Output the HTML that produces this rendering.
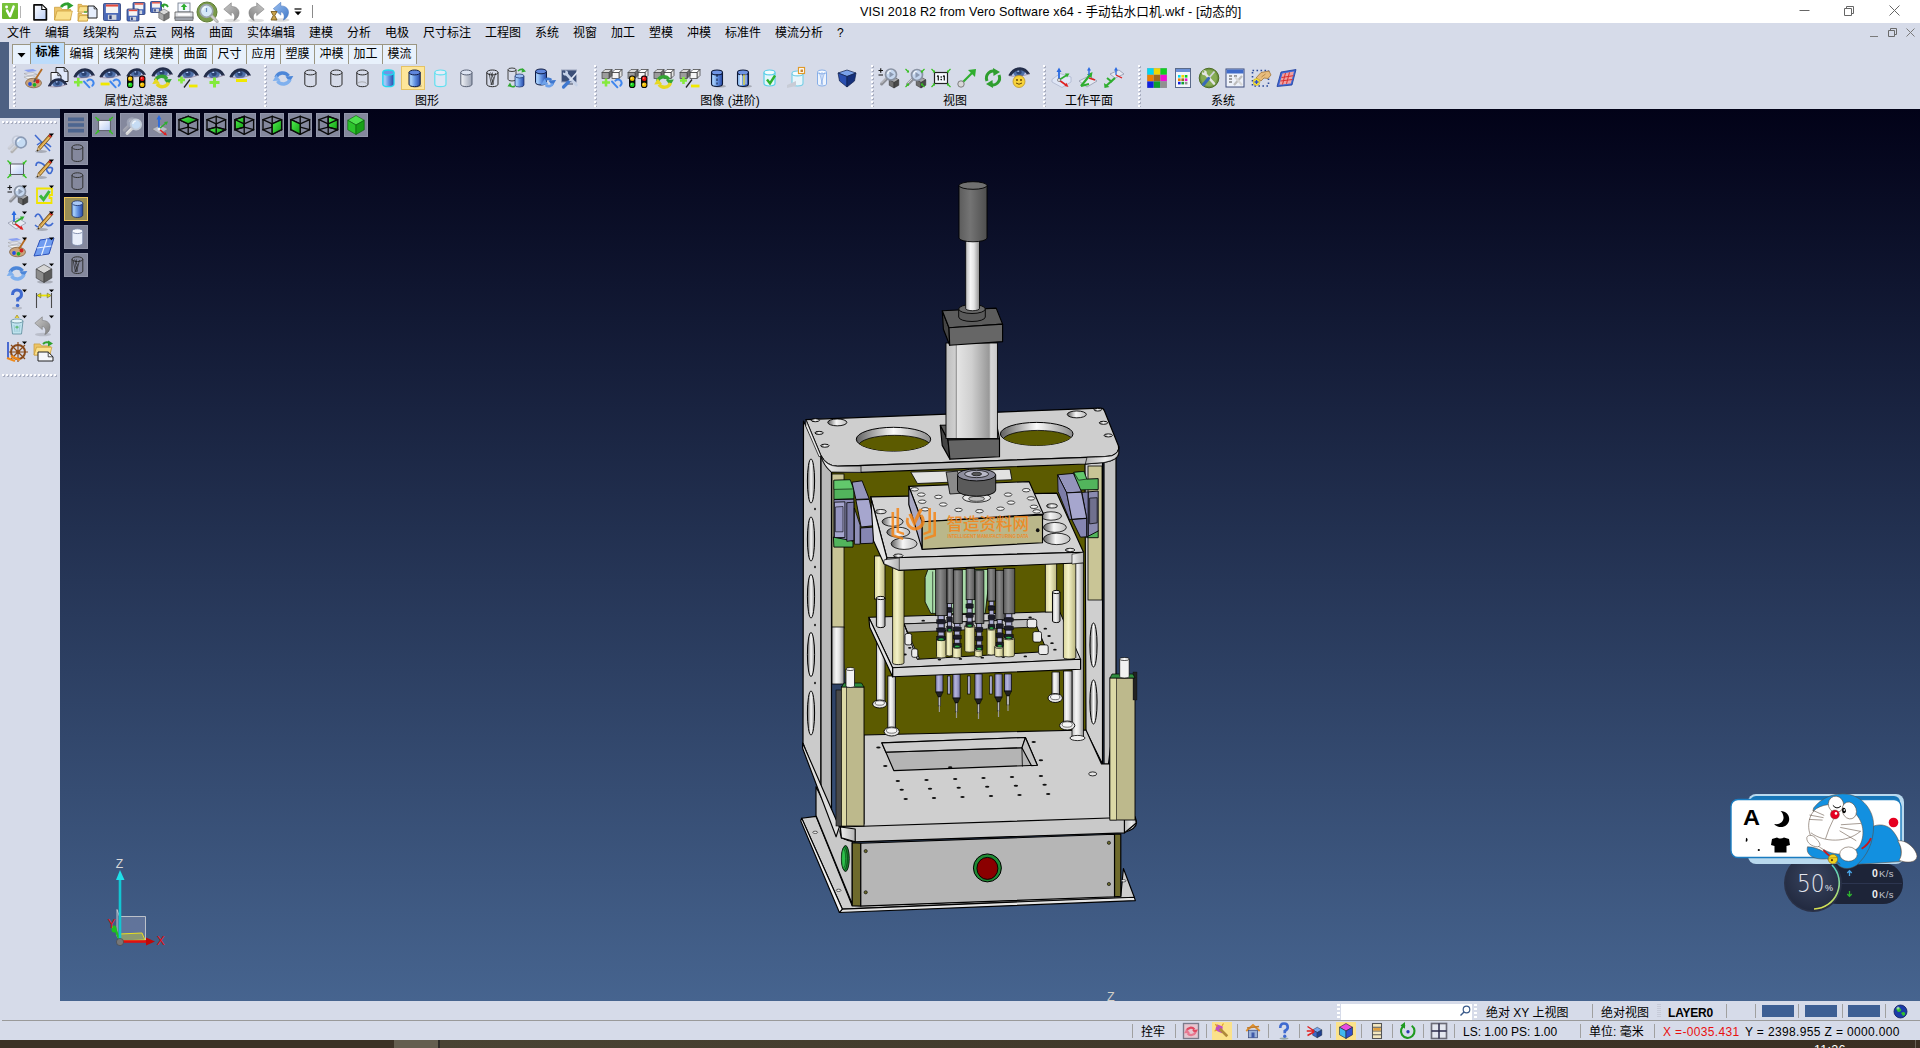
<!DOCTYPE html><html lang="zh"><head><meta charset="utf-8"><title>VISI 2018 R2</title><style>
*{box-sizing:border-box;margin:0;padding:0}
html,body{width:1920px;height:1048px;overflow:hidden;background:#d6dbe9}
body{position:relative;font-family:"Liberation Sans","Noto Sans CJK SC",sans-serif;font-size:12px;color:#000}
.abs{position:absolute}
#title{left:0;top:0;width:1920px;height:23px;background:#fff}
#title .t{position:absolute;left:860px;top:4px;height:16px;line-height:16px;font-size:12.6px;letter-spacing:.11px;white-space:nowrap;color:#000}
#menu{left:0;top:23px;width:1920px;height:20px;background:#d6dbe9}
#menu span{position:absolute;top:2px;line-height:16px;font-size:12px;white-space:nowrap}
#strip1{left:0;top:42px;width:9px;height:76px;background:#4d6082}
#strip2{left:0;top:109px;width:60px;height:9px;background:#4d6082}
#tabs{left:12px;top:43px;height:21px}
.tab{position:absolute;top:1px;height:20px;border:1px solid #9b9682;border-bottom:none;background:#e8f1fc;line-height:18px;text-align:center;font-size:12px}
.tab.sel{top:-1px;height:22px;background:#bcdcfb;font-weight:bold;line-height:19px}
#tool{left:9px;top:64px;width:1911px;height:45px;background:#d6dbe9}
.glabel{position:absolute;top:94px;line-height:14px;font-size:12px;white-space:nowrap;transform:translateX(-50%)}
.grip{position:absolute;top:65px;width:3px;height:42px;background-image:repeating-linear-gradient(#fdfdff 0 2px,transparent 2px 4px),repeating-linear-gradient(#a9aec0 0 2px,transparent 2px 4px);background-size:2px 100%,2px 100%;background-position:0 0,1px 1px;background-repeat:no-repeat}
.ic{position:absolute;width:24px;height:24px}
.ic svg{position:absolute;left:0;top:0;width:24px;height:24px;overflow:visible}
#vp{left:60px;top:109px;width:1860px;height:892px;background:linear-gradient(#020218,#46648f)}
#left{left:0;top:118px;width:60px;height:883px;background:#d6dbe9}
.hgrip{position:absolute;left:2px;width:56px;height:3px;background-image:repeating-linear-gradient(90deg,#fdfdff 0 2px,transparent 2px 4px),repeating-linear-gradient(90deg,#a9aec0 0 2px,transparent 2px 4px);background-size:100% 2px,100% 2px;background-position:0 0,1px 1px;background-repeat:no-repeat}
#st1{left:0;top:1001px;width:1920px;height:20px;background:#d6dbe9}
#st2{left:0;top:1021px;width:1920px;height:19px;background:#d6dbe9}
#stline{left:2px;top:1020px;width:1918px;height:1px;background:#9a9a9a}
#task{left:0;top:1040px;width:1920px;height:8px;background:#3c3226}
.stt{position:absolute;line-height:16px;font-size:12px;white-space:nowrap}
.vsep{position:absolute;width:1px;background:#a0a0a0}
.vb{position:absolute;width:24px;height:24px;background:#84889d;border:1px solid #9296aa}
.vb svg{position:absolute;left:-1px;top:-1px;width:24px;height:24px;overflow:visible}
</style></head><body><div id="title" class="abs"><div class="t">VISI 2018 R2 from Vero Software x64 - 手动钻水口机.wkf - [动态的]</div><svg class="abs" style="left:2px;top:3px" width="16" height="16" viewBox="0 0 16 16"><rect width="16" height="16" rx="1" fill="#68b82a"/><rect width="16" height="7" rx="1" fill="#86cc4c" opacity=".5"/><path d="M5 7.600L8 13.200L11.600 3.600" fill="none" stroke="#fff" stroke-width="2.500" stroke-linecap="round" stroke-linejoin="round"/><circle cx="4.600" cy="4" r="1.450" fill="#fff"/></svg><div class="abs" style="left:20px;top:6px;width:1px;height:12px;background:#b5b5b5"></div><div class="ic" style="left:28px;top:0px;"><svg viewBox="0 0 24 24"><path d="M6 4.800h8l4.400 4.400v10.600h-12.400z" fill="url(#gdoc)" stroke="#0a0a0a" stroke-width="1.700" stroke-linejoin="round"/><path d="M13.800 5v4.500h4.500" fill="#fff" stroke="#0a0a0a" stroke-width="1.100"/></svg></div><div class="ic" style="left:52px;top:0px;"><svg viewBox="0 0 24 24"><path d="M2.5 7.25h5.95l1.7 2.25h8.5v10.5h-16.15z" fill="#ecc468" stroke="#c89a34" stroke-width="0.7"/><path d="M2.5 20l2.55 -9h15.3l-2.04 9z" fill="#fae08c" stroke="#c89a34" stroke-width="0.7"/><path d="M9 7 q4 -5 9 -2" fill="none" stroke="#2fa02f" stroke-width="2.6"/><polygon points="15.5,2 21.5,5.5 15.5,9.5" fill="#2fa02f"/></svg></div><div class="ic" style="left:76px;top:0px;"><svg viewBox="0 0 24 24"><path d="M2 4.35h3.5l1 1.35h5v6.3h-9.5z" fill="#ecc468" stroke="#c89a34" stroke-width="0.7"/><path d="M2 12l1.5 -5.4h9l-1.2 5.4z" fill="#fae08c" stroke="#c89a34" stroke-width="0.7"/><path d="M2 13.35h3.5l1 1.35h5v6.3h-9.5z" fill="#ecc468" stroke="#c89a34" stroke-width="0.7"/><path d="M2 21l1.5 -5.4h9l-1.2 5.4z" fill="#fae08c" stroke="#c89a34" stroke-width="0.7"/><path d="M12 6h6.12l2.88 2.88v9.12h-9z" fill="#e6eefc" stroke="#222" stroke-width="1"/><path d="M18.12 6v2.88h2.88" fill="none" stroke="#222" stroke-width="0.8"/><path d="M8 12h3" stroke="#3a3" stroke-width="1.2"/></svg></div><div class="ic" style="left:99.5px;top:0px;"><svg viewBox="0 0 24 24"><rect x="3.5" y="3.5" width="17" height="17" rx="1" fill="#4a69b8" stroke="#2a3c78" stroke-width="0.8"/><rect x="5.88" y="4.52" width="12.24" height="8.5" fill="#f4f4f4"/><rect x="5.88" y="4.52" width="12.24" height="2.04" fill="#e44a3a"/><rect x="7.92" y="14.72" width="8.5" height="5.1" fill="#d0d4dc"/><rect x="9.28" y="15.4" width="2.38" height="3.74" fill="#2a3c78"/></svg></div><div class="ic" style="left:124px;top:0px;"><svg viewBox="0 0 24 24"><rect x="9" y="2.5" width="12" height="12" rx="1" fill="#4a69b8" stroke="#2a3c78" stroke-width="0.8"/><rect x="10.68" y="3.22" width="8.64" height="6" fill="#f4f4f4"/><rect x="10.68" y="3.22" width="8.64" height="1.44" fill="#e44a3a"/><rect x="12.12" y="10.42" width="6" height="3.6" fill="#d0d4dc"/><rect x="13.08" y="10.9" width="1.68" height="2.64" fill="#2a3c78"/><rect x="3" y="9" width="12" height="12" rx="1" fill="#4a69b8" stroke="#2a3c78" stroke-width="0.8"/><rect x="4.68" y="9.72" width="8.64" height="6" fill="#f4f4f4"/><rect x="4.68" y="9.72" width="8.64" height="1.44" fill="#e44a3a"/><rect x="6.12" y="16.92" width="6" height="3.6" fill="#d0d4dc"/><rect x="7.08" y="17.4" width="1.68" height="2.64" fill="#2a3c78"/></svg></div><div class="ic" style="left:148px;top:0px;"><svg viewBox="0 0 24 24"><rect x="2.5" y="1.5" width="11" height="11" rx="1" fill="#4a69b8" stroke="#2a3c78" stroke-width="0.8"/><rect x="4.04" y="2.16" width="7.92" height="5.5" fill="#f4f4f4"/><rect x="4.04" y="2.16" width="7.92" height="1.32" fill="#e44a3a"/><rect x="5.36" y="8.76" width="5.5" height="3.3" fill="#d0d4dc"/><rect x="6.24" y="9.2" width="1.54" height="2.42" fill="#2a3c78"/><polygon points="16,9 21.22,12 16,15 10.78,12" fill="#d9d9d9" stroke="#555" stroke-width="0.5"/><polygon points="10.78,12 16,15 16,21 10.78,18" fill="#a9a9a9" stroke="#555" stroke-width="0.5"/><polygon points="21.22,12 16,15 16,21 21.22,18" fill="#7a7a7a" stroke="#555" stroke-width="0.5"/><path d="M14 6 q4 -3 6 1" fill="none" stroke="#2fa02f" stroke-width="1.8"/><polygon points="12.5,5.5 16.5,3 16,8" fill="#2fa02f"/></svg></div><div class="ic" style="left:172px;top:0px;"><svg viewBox="0 0 24 24"><rect x="6" y="3" width="12" height="9" fill="#f4f8ff" stroke="#6a7486" stroke-width="0.8"/><path d="M12 10V5.5" stroke="#2fae2f" stroke-width="2.2"/><polygon points="8.8,7 12,3.4 15.2,7" fill="#2fae2f"/><path d="M3 12h18v7H3z" fill="#e4e6ea" stroke="#555" stroke-width="0.8"/><rect x="3" y="17" width="18" height="3.5" fill="#9fa3ab" stroke="#555" stroke-width="0.6"/><rect x="6" y="13.5" width="12" height="2" fill="#fff"/></svg></div><div class="ic" style="left:195px;top:0px;"><svg viewBox="0 0 24 24"><circle cx="12" cy="12" r="10" fill="#7a9a4a"/><circle cx="12" cy="12" r="10" fill="none" stroke="#5d7c34" stroke-width="1"/><path d="M16.225 15.725l5.985 5.985" stroke="#b9b9b9" stroke-width="3.200" stroke-linecap="round"/><path d="M15.725 15.225l5.67 5.67" stroke="#fff" stroke-width="1" stroke-linecap="round" opacity=".6"/><circle cx="11.5" cy="11" r="6.3" fill="#d6e8fa" stroke="#9aa3ad" stroke-width="1.700"/><path d="M7.72 10.37a3.78 3.78 0 0 1 3.465 -3.465" fill="none" stroke="#fff" stroke-width="1.200" opacity=".8"/><path d="M11.5 8v4" stroke="#6b8fc0" stroke-width="1.2"/></svg></div><div class="ic" style="left:220px;top:0px;"><svg viewBox="0 0 24 24"><g transform="translate(0 0)"><ellipse cx="12" cy="20.500" rx="8" ry="1.800" fill="#000" opacity=".13"/><path d="M3.800 9.200 L11.300 2.800 L11.300 6.400 C17 6.400 19.400 10 19 13.600 C18.600 17.200 16.400 19.600 13.800 20.600 C15.400 17.600 15 13.200 11.300 12.300 L11.300 15.600 Z" fill="url(#gArr)" stroke="#6f6f6f" stroke-width=".5"/></g></svg></div><div class="ic" style="left:243.5px;top:0px;"><svg viewBox="0 0 24 24"><g transform="translate(24 0) scale(-1 1)"><ellipse cx="12" cy="20.500" rx="8" ry="1.800" fill="#000" opacity=".13"/><path d="M3.800 9.200 L11.300 2.800 L11.300 6.400 C17 6.400 19.400 10 19 13.600 C18.600 17.200 16.400 19.600 13.800 20.600 C15.400 17.600 15 13.200 11.300 12.300 L11.300 15.600 Z" fill="url(#gArr)" stroke="#6f6f6f" stroke-width=".5"/></g></svg></div><div class="ic" style="left:267.5px;top:0px;"><svg viewBox="0 0 24 24"><g transform="translate(1.5 -0.5)"><ellipse cx="12" cy="20.500" rx="8" ry="1.800" fill="#000" opacity=".13"/><path d="M3.800 9.200 L11.300 2.800 L11.300 6.400 C17 6.400 19.400 10 19 13.600 C18.600 17.200 16.400 19.600 13.800 20.600 C15.400 17.600 15 13.200 11.300 12.300 L11.300 15.600 Z" fill="url(#gArrB)" stroke="#3f6fb8" stroke-width=".5"/></g><path d="M3 11.5h6l-2.2 4 2.2 4.5h-6l2.2-4.5z" fill="#c9a24a" stroke="#6a4e14" stroke-width="0.8"/></svg></div><svg class="abs" style="left:294px;top:8px" width="9" height="9"><path d="M0.5 1h7" stroke="#000" stroke-width="1.2"/><path d="M0.5 3.5h7l-3.5 3.8z" fill="#000"/></svg><div class="abs" style="left:312px;top:5px;width:1px;height:13px;background:#8a8a8a"></div><svg class="abs" style="left:1780px;top:0" width="140" height="23" viewBox="0 0 140 23"><path d="M19.500 10.500h10" stroke="#666" stroke-width="1"/><path d="M64.500 8.500h7v7h-7zM66.500 8.500v-2h7v7h-2" fill="none" stroke="#666" stroke-width="1"/><path d="M109.500 5.500l10 10M119.500 5.500l-10 10" stroke="#666" stroke-width="1"/></svg><svg width="0" height="0" style="position:absolute"><defs><linearGradient id="gdoc" x1="0" y1="0" x2="1" y2="1"><stop offset="0" stop-color="#fff"/><stop offset="1" stop-color="#b9cdf5"/></linearGradient><linearGradient id="gcylb" x1="0" x2="1"><stop offset="0" stop-color="#8fbcf4"/><stop offset=".2" stop-color="#a4ccf8"/><stop offset=".55" stop-color="#5f8fe0"/><stop offset="1" stop-color="#2848a4"/></linearGradient><linearGradient id="gGreen" x1="0" y1="0" x2="1" y2="1"><stop offset="0" stop-color="#52f052"/><stop offset="1" stop-color="#12a012"/></linearGradient><linearGradient id="gArr" x1="0" y1="0" x2="1" y2="1"><stop offset="0" stop-color="#c9c9c9"/><stop offset="1" stop-color="#808080"/></linearGradient><linearGradient id="gArrB" x1="0" y1="0" x2="1" y2="1"><stop offset="0" stop-color="#9cc0f0"/><stop offset="1" stop-color="#3f78c8"/></linearGradient><linearGradient id="gcylg" x1="0" x2="1"><stop offset="0" stop-color="#f4f6fa"/><stop offset="1" stop-color="#9aa2b4"/></linearGradient></defs></svg></div><div id="menu" class="abs"><span style="left:7px">文件</span><span style="left:45px">编辑</span><span style="left:83px">线架构</span><span style="left:133px">点云</span><span style="left:171px">网格</span><span style="left:209px">曲面</span><span style="left:247px">实体编辑</span><span style="left:309px">建模</span><span style="left:347px">分析</span><span style="left:385px">电极</span><span style="left:423px">尺寸标注</span><span style="left:485px">工程图</span><span style="left:535px">系统</span><span style="left:573px">视窗</span><span style="left:611px">加工</span><span style="left:649px">塑模</span><span style="left:687px">冲模</span><span style="left:725px">标准件</span><span style="left:775px">模流分析</span><span style="left:837px">?</span><svg class="abs" style="left:1860px;top:0" width="60" height="20" viewBox="0 0 60 20"><path d="M10 13.500h8" stroke="#7a7a7a" stroke-width="1"/><path d="M28.500 7.500h6v6h-6zM30.500 7.500v-2h6v6h-2" fill="none" stroke="#6a6a6a" stroke-width="1"/><path d="M46.500 5.500l8 8M54.500 5.500l-8 8" stroke="#7a7a7a" stroke-width="1"/></svg></div><div id="strip1" class="abs"></div><div id="strip2" class="abs"></div><div id="tabs" class="abs"><div class="tab" style="left:0;width:19px;background:#e8f1fc"><svg width="17" height="18" style="position:absolute;left:0;top:0"><path d="M4.5 8h8l-4 4.5z" fill="#000"/></svg></div><div class="tab sel" style="left:18px;width:35px">标准</div><div class="tab" style="left:52px;width:35px">编辑</div><div class="tab" style="left:86px;width:47px">线架构</div><div class="tab" style="left:132px;width:35px">建模</div><div class="tab" style="left:166px;width:35px">曲面</div><div class="tab" style="left:200px;width:35px">尺寸</div><div class="tab" style="left:234px;width:35px">应用</div><div class="tab" style="left:268px;width:35px">塑膜</div><div class="tab" style="left:302px;width:35px">冲模</div><div class="tab" style="left:336px;width:35px">加工</div><div class="tab" style="left:370px;width:35px">模流</div></div><div id="tool" class="abs"></div><div class="grip" style="left:13px"></div><div class="grip" style="left:264px"></div><div class="grip" style="left:594px"></div><div class="grip" style="left:871px"></div><div class="grip" style="left:1043px"></div><div class="grip" style="left:1138px"></div><div class="glabel" style="left:136px">属性/过滤器</div><div class="glabel" style="left:427px">图形</div><div class="glabel" style="left:730px">图像 (进阶)</div><div class="glabel" style="left:955px">视图</div><div class="glabel" style="left:1089px">工作平面</div><div class="glabel" style="left:1223px">系统</div><div class="ic" style="left:21px;top:66px;"><svg viewBox="0 0 24 24"><path d="M3 4l9-1 4 2-9 1z" fill="#8aa0f0"/><path d="M3 7.500l9-1 4 2-9 1z" fill="#e6e6ee" stroke="#888" stroke-width=".4"/><path d="M3 11l9-1 4 2-9 1z" fill="#f4f4f4" stroke="#888" stroke-width=".4"/><ellipse cx="12.500" cy="17" rx="8" ry="4.800" fill="#c9a27a" stroke="#7a5a3a" stroke-width=".7"/><circle cx="9" cy="18" r="1.900" fill="#2450e0"/><circle cx="13.500" cy="18.800" r="1.900" fill="#20b020"/><circle cx="16.500" cy="15.500" r="1.900" fill="#d02020"/><path d="M21 3L14 14" stroke="#b46a22" stroke-width="1.800"/><path d="M14.800 12.700L13 16" stroke="#555" stroke-width="1.800"/></svg></div><div class="ic" style="left:47px;top:66px;"><svg viewBox="0 0 24 24"><path d="M9 1.5h8.16l3.84 3.84v10.16h-12z" fill="#dfe8fa" stroke="#222" stroke-width="1"/><path d="M17.16 1.5v3.84h3.84" fill="none" stroke="#222" stroke-width="0.8"/><path d="M4 6.5h6.8l3.2 3.2v8.8h-10z" fill="url(#gdoc)" stroke="#222" stroke-width="1"/><path d="M10.8 6.5v3.2h3.2" fill="none" stroke="#222" stroke-width="0.8"/><clipPath id="ey1"><path d="M1.5 20.11 C4.2 14.78 7.8 13 11.4 13 C15 13 17.7 15.22 19.5 18.33 C16.8 20.11 13.2 21 9.6 21 C6 21 3.3 20.56 1.5 20.11 Z"/></clipPath><path d="M1.5 20.11 C4.2 14.78 7.8 13 11.4 13 C15 13 17.7 15.22 19.5 18.33 C16.8 20.11 13.2 21 9.6 21 C6 21 3.3 20.56 1.5 20.11 Z" fill="#bccbee"/><g clip-path="url(#ey1)"><ellipse cx="10.5" cy="17.0889" rx="5.22" ry="4.44444" fill="#4f70a8"/><ellipse cx="10.5" cy="16.9111" rx="2.34" ry="2.22222" fill="#2c4474"/><ellipse cx="9.78" cy="15.8444" rx="0.99" ry="0.8" fill="#b9d2ff"/><path d="M1.5 20.11 C4.2 14.78 7.8 13 11.4 13 C15 13 17.7 15.22 19.5 18.33" fill="none" stroke="#25314f" stroke-width="4.08889"/></g><path d="M1.77 19.76 C4.2 14.78 7.8 13 11.4 13 C15 13 17.7 15.22 19.5 18.33" fill="none" stroke="#222c48" stroke-width="1.500" stroke-linecap="round"/><path d="M1.5 20.29 C6 21.27 13.2 21.27 19.5 18.51" fill="none" stroke="#8a6a7a" stroke-width=".5"/></svg></div><div class="ic" style="left:72px;top:66px;"><svg viewBox="0 0 24 24"><clipPath id="ey2"><path d="M2 11 C5 5 9 3 13 3 C17 3 20 5.5 22 9 C19 11 15 12 11 12 C7 12 4 11.5 2 11 Z"/></clipPath><path d="M2 11 C5 5 9 3 13 3 C17 3 20 5.5 22 9 C19 11 15 12 11 12 C7 12 4 11.5 2 11 Z" fill="#bccbee"/><g clip-path="url(#ey2)"><ellipse cx="12" cy="7.6" rx="5.8" ry="5" fill="#4f70a8"/><ellipse cx="12" cy="7.4" rx="2.6" ry="2.5" fill="#2c4474"/><ellipse cx="11.2" cy="6.2" rx="1.1" ry="0.9" fill="#b9d2ff"/><path d="M2 11 C5 5 9 3 13 3 C17 3 20 5.5 22 9" fill="none" stroke="#25314f" stroke-width="4.6"/></g><path d="M2.3 10.6 C5 5 9 3 13 3 C17 3 20 5.5 22 9" fill="none" stroke="#222c48" stroke-width="1.500" stroke-linecap="round"/><path d="M2 11.2 C7 12.3 15 12.3 22 9.2" fill="none" stroke="#8a6a7a" stroke-width=".5"/><path d="M2 16.25h8.5 M6.25 12v8.5" stroke="#84ea3c" stroke-width="2.6" fill="none"/><path d="M12 15.5 l5.400 5.800" stroke="#3f86ee" stroke-width="1.900" fill="none" stroke-linecap="round"/><path d="M15.3 14.7 q3 -2.300 5.500 .100 q2 2.700 -.500 5" stroke="#3f86ee" stroke-width="1.900" fill="none" stroke-linecap="round"/></svg></div><div class="ic" style="left:98px;top:66px;"><svg viewBox="0 0 24 24"><clipPath id="ey3"><path d="M2 11 C5 5 9 3 13 3 C17 3 20 5.5 22 9 C19 11 15 12 11 12 C7 12 4 11.5 2 11 Z"/></clipPath><path d="M2 11 C5 5 9 3 13 3 C17 3 20 5.5 22 9 C19 11 15 12 11 12 C7 12 4 11.5 2 11 Z" fill="#bccbee"/><g clip-path="url(#ey3)"><ellipse cx="12" cy="7.6" rx="5.8" ry="5" fill="#4f70a8"/><ellipse cx="12" cy="7.4" rx="2.6" ry="2.5" fill="#2c4474"/><ellipse cx="11.2" cy="6.2" rx="1.1" ry="0.9" fill="#b9d2ff"/><path d="M2 11 C5 5 9 3 13 3 C17 3 20 5.5 22 9" fill="none" stroke="#25314f" stroke-width="4.6"/></g><path d="M2.3 10.6 C5 5 9 3 13 3 C17 3 20 5.5 22 9" fill="none" stroke="#222c48" stroke-width="1.500" stroke-linecap="round"/><path d="M2 11.2 C7 12.3 15 12.3 22 9.2" fill="none" stroke="#8a6a7a" stroke-width=".5"/><path d="M2.6 18h9" stroke="#f0e800" stroke-width="2.8" fill="none"/><path d="M12.3 15.5 l5.400 5.800" stroke="#3f86ee" stroke-width="1.900" fill="none" stroke-linecap="round"/><path d="M15.6 14.7 q3 -2.300 5.500 .100 q2 2.700 -.500 5" stroke="#3f86ee" stroke-width="1.900" fill="none" stroke-linecap="round"/></svg></div><div class="ic" style="left:124px;top:66px;"><svg viewBox="0 0 24 24"><clipPath id="ey4"><path d="M3 10.11 C5.7 4.78 9.3 3 12.9 3 C16.5 3 19.2 5.22 21 8.33 C18.3 10.11 14.7 11 11.1 11 C7.5 11 4.8 10.56 3 10.11 Z"/></clipPath><path d="M3 10.11 C5.7 4.78 9.3 3 12.9 3 C16.5 3 19.2 5.22 21 8.33 C18.3 10.11 14.7 11 11.1 11 C7.5 11 4.8 10.56 3 10.11 Z" fill="#bccbee"/><g clip-path="url(#ey4)"><ellipse cx="12" cy="7.08889" rx="5.22" ry="4.44444" fill="#4f70a8"/><ellipse cx="12" cy="6.91111" rx="2.34" ry="2.22222" fill="#2c4474"/><ellipse cx="11.28" cy="5.84444" rx="0.99" ry="0.8" fill="#b9d2ff"/><path d="M3 10.11 C5.7 4.78 9.3 3 12.9 3 C16.5 3 19.2 5.22 21 8.33" fill="none" stroke="#25314f" stroke-width="4.08889"/></g><path d="M3.27 9.76 C5.7 4.78 9.3 3 12.9 3 C16.5 3 19.2 5.22 21 8.33" fill="none" stroke="#222c48" stroke-width="1.500" stroke-linecap="round"/><path d="M3 10.29 C7.5 11.27 14.7 11.27 21 8.51" fill="none" stroke="#8a6a7a" stroke-width=".5"/><rect x="3" y="9.5" width="6.4" height="12.6" rx="2.8" fill="#080808"/><circle cx="6.2" cy="12.8" r="2.3" fill="#f4c000"/><circle cx="5.7" cy="12.1" r=".8" fill="#fff" opacity=".55"/><circle cx="6.2" cy="18.8" r="2.3" fill="#18d018"/><circle cx="5.7" cy="18.1" r=".8" fill="#fff" opacity=".55"/><rect x="15" y="9.5" width="6.4" height="12.6" rx="2.8" fill="#080808"/><circle cx="18.2" cy="12.8" r="2.3" fill="#f01010"/><circle cx="17.7" cy="12.1" r=".8" fill="#fff" opacity=".55"/><circle cx="18.2" cy="18.8" r="2.3" fill="#f4c000"/><circle cx="17.7" cy="18.1" r=".8" fill="#fff" opacity=".55"/></svg></div><div class="ic" style="left:150px;top:66px;"><svg viewBox="0 0 24 24"><clipPath id="ey5"><path d="M2 10 C5 4 9 2 13 2 C17 2 20 4.5 22 8 C19 10 15 11 11 11 C7 11 4 10.5 2 10 Z"/></clipPath><path d="M2 10 C5 4 9 2 13 2 C17 2 20 4.5 22 8 C19 10 15 11 11 11 C7 11 4 10.5 2 10 Z" fill="#bccbee"/><g clip-path="url(#ey5)"><ellipse cx="12" cy="6.6" rx="5.8" ry="5" fill="#4f70a8"/><ellipse cx="12" cy="6.4" rx="2.6" ry="2.5" fill="#2c4474"/><ellipse cx="11.2" cy="5.2" rx="1.1" ry="0.9" fill="#b9d2ff"/><path d="M2 10 C5 4 9 2 13 2 C17 2 20 4.5 22 8" fill="none" stroke="#25314f" stroke-width="4.6"/></g><path d="M2.3 9.6 C5 4 9 2 13 2 C17 2 20 4.5 22 8" fill="none" stroke="#222c48" stroke-width="1.500" stroke-linecap="round"/><path d="M2 10.2 C7 11.3 15 11.3 22 8.2" fill="none" stroke="#8a6a7a" stroke-width=".5"/><path d="M5.5 14.5 a6.5 6.175 0 0 1 11.5 -1.5" fill="none" stroke="#35a535" stroke-width="3.4"/><polygon points="14,13.5 21.8,13 18.2,19" fill="#35a535"/><path d="M18.5 16.5 a6.5 6.175 0 0 1 -11.5 1.5" fill="none" stroke="#e8d820" stroke-width="3.4"/><polygon points="10,17.5 2.2,18 5.8,12" fill="#e8d820"/></svg></div><div class="ic" style="left:176px;top:66px;"><svg viewBox="0 0 24 24"><clipPath id="ey6"><path d="M2 11 C5 5 9 3 13 3 C17 3 20 5.5 22 9 C19 11 15 12 11 12 C7 12 4 11.5 2 11 Z"/></clipPath><path d="M2 11 C5 5 9 3 13 3 C17 3 20 5.5 22 9 C19 11 15 12 11 12 C7 12 4 11.5 2 11 Z" fill="#bccbee"/><g clip-path="url(#ey6)"><ellipse cx="12" cy="7.6" rx="5.8" ry="5" fill="#4f70a8"/><ellipse cx="12" cy="7.4" rx="2.6" ry="2.5" fill="#2c4474"/><ellipse cx="11.2" cy="6.2" rx="1.1" ry="0.9" fill="#b9d2ff"/><path d="M2 11 C5 5 9 3 13 3 C17 3 20 5.5 22 9" fill="none" stroke="#25314f" stroke-width="4.6"/></g><path d="M2.3 10.6 C5 5 9 3 13 3 C17 3 20 5.5 22 9" fill="none" stroke="#222c48" stroke-width="1.500" stroke-linecap="round"/><path d="M2 11.2 C7 12.3 15 12.3 22 9.2" fill="none" stroke="#8a6a7a" stroke-width=".5"/><path d="M2 14h7 M5.5 10.5v7" stroke="#84ea3c" stroke-width="2.6" fill="none"/><path d="M8 21.500L14 13.500" stroke="#222" stroke-width="1.300"/><path d="M13 20h8.5" stroke="#f0e800" stroke-width="2.8" fill="none"/></svg></div><div class="ic" style="left:202px;top:66px;"><svg viewBox="0 0 24 24"><clipPath id="ey7"><path d="M2 11 C5 5 9 3 13 3 C17 3 20 5.5 22 9 C19 11 15 12 11 12 C7 12 4 11.5 2 11 Z"/></clipPath><path d="M2 11 C5 5 9 3 13 3 C17 3 20 5.5 22 9 C19 11 15 12 11 12 C7 12 4 11.5 2 11 Z" fill="#bccbee"/><g clip-path="url(#ey7)"><ellipse cx="12" cy="7.6" rx="5.8" ry="5" fill="#4f70a8"/><ellipse cx="12" cy="7.4" rx="2.6" ry="2.5" fill="#2c4474"/><ellipse cx="11.2" cy="6.2" rx="1.1" ry="0.9" fill="#b9d2ff"/><path d="M2 11 C5 5 9 3 13 3 C17 3 20 5.5 22 9" fill="none" stroke="#25314f" stroke-width="4.6"/></g><path d="M2.3 10.6 C5 5 9 3 13 3 C17 3 20 5.5 22 9" fill="none" stroke="#222c48" stroke-width="1.500" stroke-linecap="round"/><path d="M2 11.2 C7 12.3 15 12.3 22 9.2" fill="none" stroke="#8a6a7a" stroke-width=".5"/><path d="M7.5 16.5h10 M12.5 11.5v10" stroke="#84ea3c" stroke-width="3" fill="none"/></svg></div><div class="ic" style="left:228px;top:66px;"><svg viewBox="0 0 24 24"><clipPath id="ey8"><path d="M2 11 C5 5 9 3 13 3 C17 3 20 5.5 22 9 C19 11 15 12 11 12 C7 12 4 11.5 2 11 Z"/></clipPath><path d="M2 11 C5 5 9 3 13 3 C17 3 20 5.5 22 9 C19 11 15 12 11 12 C7 12 4 11.5 2 11 Z" fill="#bccbee"/><g clip-path="url(#ey8)"><ellipse cx="12" cy="7.6" rx="5.8" ry="5" fill="#4f70a8"/><ellipse cx="12" cy="7.4" rx="2.6" ry="2.5" fill="#2c4474"/><ellipse cx="11.2" cy="6.2" rx="1.1" ry="0.9" fill="#b9d2ff"/><path d="M2 11 C5 5 9 3 13 3 C17 3 20 5.5 22 9" fill="none" stroke="#25314f" stroke-width="4.6"/></g><path d="M2.3 10.6 C5 5 9 3 13 3 C17 3 20 5.5 22 9" fill="none" stroke="#222c48" stroke-width="1.500" stroke-linecap="round"/><path d="M2 11.2 C7 12.3 15 12.3 22 9.2" fill="none" stroke="#8a6a7a" stroke-width=".5"/><path d="M8 14.5h11" stroke="#f0e800" stroke-width="3" fill="none"/></svg></div><div class="ic" style="left:271px;top:66px;"><svg viewBox="0 0 24 24"><path d="M5 11.5 a7 6.65 0 0 1 12.5 -1.5" fill="none" stroke="#4c86d8" stroke-width="3.4"/><polygon points="14.5,10.5 22.3,10 18.7,16" fill="#4c86d8"/><path d="M19 13.5 a7 6.65 0 0 1 -12.5 1.5" fill="none" stroke="#7fb0ee" stroke-width="3.4"/><polygon points="9.5,14.5 1.7,15 5.3,9" fill="#7fb0ee"/></svg></div><div class="ic" style="left:298px;top:66px;"><svg viewBox="0 0 24 24"><path d="M6.8 6.464 v11.772 a5.6 2.464 0 0 0 11.2 0 v-11.772" fill="none" stroke="#2a2a2a" stroke-width="1"/><ellipse cx="12.4" cy="6.464" rx="5.6" ry="2.464" fill="none" stroke="#2a2a2a" stroke-width="1"/></svg></div><div class="ic" style="left:324px;top:66px;"><svg viewBox="0 0 24 24"><path d="M6.8 6.464 v11.772 a5.6 2.464 0 0 0 11.2 0 v-11.772" fill="none" stroke="#2a2a2a" stroke-width="1"/><ellipse cx="12.4" cy="6.464" rx="5.6" ry="2.464" fill="none" stroke="#2a2a2a" stroke-width="1"/></svg></div><div class="ic" style="left:350px;top:66px;"><svg viewBox="0 0 24 24"><path d="M6.8 6.464 v11.772 a5.6 2.464 0 0 0 11.2 0 v-11.772" fill="none" stroke="#2a2a2a" stroke-width="1"/><ellipse cx="12.4" cy="6.464" rx="5.6" ry="2.464" fill="none" stroke="#2a2a2a" stroke-width="1"/><path d="M7.500 17.800a4.500 2 0 0 1 9 0" fill="none" stroke="#999" stroke-width=".7"/></svg></div><div class="ic" style="left:376px;top:66px;"><svg viewBox="0 0 24 24"><path d="M6.8 6.464 v11.772 a5.6 2.464 0 0 0 11.2 0 v-11.772" fill="url(#gcylb)" stroke="#22d8f0" stroke-width="1.3"/><ellipse cx="12.4" cy="6.464" rx="5.6" ry="2.464" fill="#6f94e4" stroke="#22d8f0" stroke-width="1.3"/></svg></div><div class="abs" style="left:401px;top:66px;width:24px;height:24px;background:#fde69a;border:1px solid #e5c365"></div><div class="ic" style="left:401px;top:66px;"><svg viewBox="0 0 24 24"><ellipse cx="15" cy="20" rx="6" ry="1.500" fill="#000" opacity=".25"/><path d="M8 6.464 v11.772 a5.6 2.464 0 0 0 11.2 0 v-11.772" fill="url(#gcylb)" stroke="#0f1c44" stroke-width="1"/><ellipse cx="13.6" cy="6.464" rx="5.6" ry="2.464" fill="#5f86dc" stroke="#0f1c44" stroke-width="1"/></svg></div><div class="ic" style="left:428px;top:66px;"><svg viewBox="0 0 24 24"><path d="M6.8 6.464 v11.772 a5.6 2.464 0 0 0 11.2 0 v-11.772" fill="#dfe6f4" stroke="#5fe0f0" stroke-width="1.2"/><ellipse cx="12.4" cy="6.464" rx="5.6" ry="2.464" fill="#e6ecf8" stroke="#5fe0f0" stroke-width="1.2"/></svg></div><div class="ic" style="left:454px;top:66px;"><svg viewBox="0 0 24 24"><path d="M6.8 6.464 v11.772 a5.6 2.464 0 0 0 11.2 0 v-11.772" fill="url(#gcylg)" stroke="#4a5266" stroke-width="0.9"/><ellipse cx="12.4" cy="6.464" rx="5.6" ry="2.464" fill="#dde4f2" stroke="#4a5266" stroke-width="0.9"/></svg></div><div class="ic" style="left:480px;top:66px;"><svg viewBox="0 0 24 24"><path d="M6.8 6.464 v11.772 a5.6 2.464 0 0 0 11.2 0 v-11.772" fill="none" stroke="#2a2a2a" stroke-width="1"/><ellipse cx="12.4" cy="6.464" rx="5.6" ry="2.464" fill="none" stroke="#2a2a2a" stroke-width="1"/><path d="M9 7l2.500 12M15.500 7l-3 12M12.500 6.500l-1 6 2 6M10.500 6.500l3 5.500-2.500 7" stroke="#222" stroke-width=".7" fill="none"/></svg></div><div class="ic" style="left:505px;top:66px;"><svg viewBox="0 0 24 24"><path d="M3 3.76 v9.48 a4 1.76 0 0 0 8 0 v-9.48" fill="none" stroke="#444" stroke-width="1"/><ellipse cx="7" cy="3.76" rx="4" ry="1.76" fill="none" stroke="#444" stroke-width="1"/><path d="M10 9.98 v9.04 a4.5 1.98 0 0 0 9 0 v-9.04" fill="url(#gcylb)" stroke="#1a2f66" stroke-width="0.7"/><ellipse cx="14.5" cy="9.98" rx="4.5" ry="1.98" fill="#9cc0f5" stroke="#1a2f66" stroke-width="0.7"/><path d="M13 5q3-3 6-.5" fill="none" stroke="#3a3" stroke-width="1.600"/><polygon points="17.500,2 21,5.500 16.500,6.500" fill="#3a3"/><path d="M4 19q3 3 6 1" fill="none" stroke="#3a3" stroke-width="1.600"/><polygon points="5,16.500 2.500,20.500 7,20.500" fill="#3a3"/></svg></div><div class="ic" style="left:532px;top:66px;"><svg viewBox="0 0 24 24"><path d="M3.5 5.42 v11.16 a5.5 2.42 0 0 0 11 0 v-11.16" fill="url(#gcylb)" stroke="#0f1c44" stroke-width="1"/><ellipse cx="9" cy="5.42" rx="5.5" ry="2.42" fill="#5f86dc" stroke="#0f1c44" stroke-width="1"/><path d="M12.2 15.5 a4.3 4.085 0 0 1 7.1 -1.5" fill="none" stroke="#3f78d0" stroke-width="2.6"/><polygon points="16.3,14.5 24.1,14 20.5,20" fill="#3f78d0"/><path d="M20.8 17.5 a4.3 4.085 0 0 1 -7.1 1.5" fill="none" stroke="#6fa2ea" stroke-width="2.6"/><polygon points="16.7,18.5 8.9,19 12.5,13" fill="#6fa2ea"/></svg></div><div class="ic" style="left:558px;top:66px;"><svg viewBox="0 0 24 24"><rect x="3.500" y="4" width="15" height="12" fill="#3c4f78" stroke="#9aa4bc" stroke-width="1"/><rect x="8" y="17" width="7" height="2" fill="#8a92a6"/><path d="M7 6.500l11.500 12.500" stroke="#c6d2e8" stroke-width="2.600" stroke-linecap="round"/><circle cx="7.500" cy="7" r="2.600" fill="#c6d2e8"/><circle cx="6.300" cy="5.800" r="1.200" fill="#3c4f78"/><path d="M20 5.500l-10 11" stroke="#dfe6f4" stroke-width="1.800"/><path d="M10.500 16l-5 5" stroke="#3f78d0" stroke-width="3.200" stroke-linecap="round"/></svg></div><div class="ic" style="left:600px;top:66px;"><svg viewBox="0 0 24 24"><polygon points="12,6.5 15,3.5 22,3.5 19,6.5" fill="#ffffff" stroke="#333" stroke-width=".7"/><polygon points="19,6.5 22,3.5 22,9.5 19,12.5" fill="#e4e4e4" stroke="#333" stroke-width=".7"/><rect x="12" y="6.5" width="7" height="6" fill="#f6f6f6" stroke="#333" stroke-width=".7"/><polygon points="2,6.5 5,3.5 12,3.5 9,6.5" fill="#dadada" stroke="#444" stroke-width=".7"/><polygon points="9,6.5 12,3.5 12,9.5 9,12.5" fill="#6c6c6c" stroke="#444" stroke-width=".7"/><rect x="2" y="6.5" width="7" height="6" fill="#9c9c9c" stroke="#444" stroke-width=".7"/><path d="M2 16.5h8 M6 12.5v8" stroke="#84ea3c" stroke-width="2.6" fill="none"/><path d="M12 15.5 l5.400 5.800" stroke="#3f86ee" stroke-width="1.900" fill="none" stroke-linecap="round"/><path d="M15.3 14.7 q3 -2.300 5.500 .100 q2 2.700 -.500 5" stroke="#3f86ee" stroke-width="1.900" fill="none" stroke-linecap="round"/></svg></div><div class="ic" style="left:626px;top:66px;"><svg viewBox="0 0 24 24"><polygon points="12,6.5 15,3.5 22,3.5 19,6.5" fill="#ffffff" stroke="#333" stroke-width=".7"/><polygon points="19,6.5 22,3.5 22,9.5 19,12.5" fill="#e4e4e4" stroke="#333" stroke-width=".7"/><rect x="12" y="6.5" width="7" height="6" fill="#f6f6f6" stroke="#333" stroke-width=".7"/><polygon points="2,6.5 5,3.5 12,3.5 9,6.5" fill="#dadada" stroke="#444" stroke-width=".7"/><polygon points="9,6.5 12,3.5 12,9.5 9,12.5" fill="#6c6c6c" stroke="#444" stroke-width=".7"/><rect x="2" y="6.5" width="7" height="6" fill="#9c9c9c" stroke="#444" stroke-width=".7"/><rect x="3" y="9.5" width="6.4" height="12.6" rx="2.8" fill="#080808"/><circle cx="6.2" cy="12.8" r="2.3" fill="#f4c000"/><circle cx="5.7" cy="12.1" r=".8" fill="#fff" opacity=".55"/><circle cx="6.2" cy="18.8" r="2.3" fill="#18d018"/><circle cx="5.7" cy="18.1" r=".8" fill="#fff" opacity=".55"/><rect x="15" y="9.5" width="6.4" height="12.6" rx="2.8" fill="#080808"/><circle cx="18.2" cy="12.8" r="2.3" fill="#f01010"/><circle cx="17.7" cy="12.1" r=".8" fill="#fff" opacity=".55"/><circle cx="18.2" cy="18.8" r="2.3" fill="#f4c000"/><circle cx="17.7" cy="18.1" r=".8" fill="#fff" opacity=".55"/></svg></div><div class="ic" style="left:652px;top:66px;"><svg viewBox="0 0 24 24"><polygon points="12,6.5 15,3.5 22,3.5 19,6.5" fill="#ffffff" stroke="#333" stroke-width=".7"/><polygon points="19,6.5 22,3.5 22,9.5 19,12.5" fill="#e4e4e4" stroke="#333" stroke-width=".7"/><rect x="12" y="6.5" width="7" height="6" fill="#f6f6f6" stroke="#333" stroke-width=".7"/><polygon points="2,6.5 5,3.5 12,3.5 9,6.5" fill="#dadada" stroke="#444" stroke-width=".7"/><polygon points="9,6.5 12,3.5 12,9.5 9,12.5" fill="#6c6c6c" stroke="#444" stroke-width=".7"/><rect x="2" y="6.5" width="7" height="6" fill="#9c9c9c" stroke="#444" stroke-width=".7"/><path d="M5.5 15 a6.5 6.175 0 0 1 11.5 -1.5" fill="none" stroke="#35a535" stroke-width="3.4"/><polygon points="14,14 21.8,13.5 18.2,19.5" fill="#35a535"/><path d="M18.5 17 a6.5 6.175 0 0 1 -11.5 1.5" fill="none" stroke="#e8d820" stroke-width="3.4"/><polygon points="10,18 2.2,18.5 5.8,12.5" fill="#e8d820"/></svg></div><div class="ic" style="left:678px;top:66px;"><svg viewBox="0 0 24 24"><polygon points="12,6.5 15,3.5 22,3.5 19,6.5" fill="#ffffff" stroke="#333" stroke-width=".7"/><polygon points="19,6.5 22,3.5 22,9.5 19,12.5" fill="#e4e4e4" stroke="#333" stroke-width=".7"/><rect x="12" y="6.5" width="7" height="6" fill="#f6f6f6" stroke="#333" stroke-width=".7"/><polygon points="2,6.5 5,3.5 12,3.5 9,6.5" fill="#dadada" stroke="#444" stroke-width=".7"/><polygon points="9,6.5 12,3.5 12,9.5 9,12.5" fill="#6c6c6c" stroke="#444" stroke-width=".7"/><rect x="2" y="6.5" width="7" height="6" fill="#9c9c9c" stroke="#444" stroke-width=".7"/><path d="M2 14.5h7 M5.5 11v7" stroke="#84ea3c" stroke-width="2.6" fill="none"/><path d="M8 21.500L14 13.500" stroke="#222" stroke-width="1.300"/><path d="M13 20h8.5" stroke="#f0e800" stroke-width="2.8" fill="none"/></svg></div><div class="ic" style="left:705px;top:66px;"><svg viewBox="0 0 24 24"><ellipse cx="15" cy="20.200" rx="6" ry="1.400" fill="#000" opacity=".22"/><path d="M6.5 6.42 v11.66 a5.5 2.42 0 0 0 11 0 v-11.66" fill="url(#gcylb)" stroke="#0c1838" stroke-width="1.1"/><ellipse cx="12" cy="6.42" rx="5.5" ry="2.42" fill="#6f94e4" stroke="#0c1838" stroke-width="1.1"/><path d="M12 8.500v10" stroke="#0c1838" stroke-width="1" stroke-dasharray="2.500 1.500"/></svg></div><div class="ic" style="left:731px;top:66px;"><svg viewBox="0 0 24 24"><ellipse cx="15" cy="20.200" rx="6" ry="1.400" fill="#000" opacity=".22"/><path d="M6.5 6.42 v11.66 a5.5 2.42 0 0 0 11 0 v-11.66" fill="url(#gcylb)" stroke="#0c1838" stroke-width="1.1"/><ellipse cx="12" cy="6.42" rx="5.5" ry="2.42" fill="#6f94e4" stroke="#0c1838" stroke-width="1.1"/><path d="M10 8.500v10.500" stroke="#dfe6f6" stroke-width="1.800"/><path d="M13 8.500v10.500" stroke="#f0e040" stroke-width="1.400"/><path d="M15 8.300v10" stroke="#dfe6f6" stroke-width="1"/></svg></div><div class="ic" style="left:758px;top:66px;"><svg viewBox="0 0 24 24"><path d="M6 6.42 v11.16 a5.5 2.42 0 0 0 11 0 v-11.16" fill="#e4f5fb" stroke="#58cfe8" stroke-width="1.2"/><ellipse cx="11.5" cy="6.42" rx="5.5" ry="2.42" fill="#f4fbfe" stroke="#58cfe8" stroke-width="1.2"/><path d="M9 13.500l3 4 5-8" stroke="#2fb32f" stroke-width="2.400" fill="none"/></svg></div><div class="ic" style="left:784px;top:66px;"><svg viewBox="0 0 24 24"><path d="M8 7.42 v10.16 a5.5 2.42 0 0 0 11 0 v-10.16" fill="#e9f5fb" stroke="#74cfe6" stroke-width="1.1"/><ellipse cx="13.5" cy="7.42" rx="5.5" ry="2.42" fill="#f4fbfe" stroke="#74cfe6" stroke-width="1.1"/><polygon points="3,19 12,15 12,20 3,22" fill="#c8ccd6"/><rect x="14.500" y="1.500" width="6" height="6" fill="#fff" stroke="#e09a2a" stroke-width="1.200"/><rect x="16.500" y="3.500" width="2.500" height="2.500" fill="#c83"/></svg></div><div class="ic" style="left:810px;top:66px;"><svg viewBox="0 0 24 24"><path d="M7.5 5.98 v12.04 a4.5 1.98 0 0 0 9 0 v-12.04" fill="#eef4fd" stroke="#86aee8" stroke-width="1"/><ellipse cx="12" cy="5.98" rx="4.5" ry="1.98" fill="#f6faff" stroke="#86aee8" stroke-width="1"/><path d="M9.500 6.500l3 12M14.500 6.500l-3.500 12M12 6v13" stroke="#86aee8" stroke-width=".7" fill="none"/></svg></div><div class="ic" style="left:835px;top:66px;"><svg viewBox="0 0 24 24"><polygon points="3,7 12,4 21,7 12,10.500" fill="#7aa2ea" stroke="#10204a" stroke-width=".7"/><polygon points="3,7 12,10.500 12,21 4.500,15" fill="#2a4fb0" stroke="#10204a" stroke-width=".7"/><polygon points="21,7 12,10.500 12,21 19.500,15" fill="#16307a" stroke="#10204a" stroke-width=".7"/></svg></div><div class="ic" style="left:876px;top:66px;"><svg viewBox="0 0 24 24"><polygon points="18,11 22.785,13.75 18,16.5 13.215,13.75" fill="#a8a8a8" stroke="#2a2a2a" stroke-width="0.5"/><polygon points="13.215,13.75 18,16.5 18,22 13.215,19.25" fill="#6e6e6e" stroke="#2a2a2a" stroke-width="0.5"/><polygon points="22.785,13.75 18,16.5 18,22 22.785,19.25" fill="#484848" stroke="#2a2a2a" stroke-width="0.5"/><path d="M10.875 12.625l-5.225 5.225" stroke="#8d8f96" stroke-width="3.200" stroke-linecap="round"/><path d="M10.375 12.125l-4.95 4.95" stroke="#fff" stroke-width="1" stroke-linecap="round" opacity=".6"/><circle cx="15" cy="8.5" r="5.5" fill="#c4d6ee" stroke="#8a93a3" stroke-width="1.700"/><path d="M11.7 7.95a3.3 3.3 0 0 1 3.025 -3.025" fill="none" stroke="#fff" stroke-width="1.200" opacity=".8"/><polygon points="13.500,5.500 18,8.500 13.500,11.500" fill="#8a98b0"/><path d="M2.500 4.500h4.500M4.750 2.200v4.600M2.500 9h4.500" stroke="#111" stroke-width="1.100"/></svg></div><div class="ic" style="left:902.5px;top:66px;"><svg viewBox="0 0 24 24"><polygon points="18,11 22.785,13.75 18,16.5 13.215,13.75" fill="#a8a8a8" stroke="#2a2a2a" stroke-width="0.5"/><polygon points="13.215,13.75 18,16.5 18,22 13.215,19.25" fill="#6e6e6e" stroke="#2a2a2a" stroke-width="0.5"/><polygon points="22.785,13.75 18,16.5 18,22 22.785,19.25" fill="#484848" stroke="#2a2a2a" stroke-width="0.5"/><path d="M9.875 13.125l-5.225 5.225" stroke="#8d8f96" stroke-width="3.200" stroke-linecap="round"/><path d="M9.375 12.625l-4.95 4.95" stroke="#fff" stroke-width="1" stroke-linecap="round" opacity=".6"/><circle cx="14" cy="9" r="5.5" fill="#c4d6ee" stroke="#8a93a3" stroke-width="1.700"/><path d="M10.7 8.45a3.3 3.3 0 0 1 3.025 -3.025" fill="none" stroke="#fff" stroke-width="1.200" opacity=".8"/><polygon points="12.500,6 17,9 12.500,12" fill="#8a98b0"/><g fill="#35c020" stroke="#35c020" stroke-width="1.200"><path d="M2.500 3l3 3M21.500 3l-3 3M2.500 21l3-3M21.500 21l-3-3" fill="none"/><path d="M6 4v2.500h-2.500zM18 4v2.500h2.500zM6 20v-2.500h-2.500zM18 20v-2.500h2.500z" stroke="none"/></g></svg></div><div class="ic" style="left:929px;top:66px;"><svg viewBox="0 0 24 24"><rect x="5.500" y="6.500" width="13" height="11" fill="#f4f7fd" stroke="#222" stroke-width="1.200"/><path d="M9.300 9.500v5M9.300 9.500l-1.200 1.200M15.300 9.500v5M15.300 9.500l-1.200 1.200" stroke="#111" stroke-width="1.200" fill="none"/><circle cx="12.200" cy="11" r=".8"/><circle cx="12.200" cy="13.600" r=".8"/><g fill="#35c020" stroke="#35c020" stroke-width="1.200"><path d="M2.500 3l3 3M21.500 3l-3 3M2.500 21l3-3M21.500 21l-3-3" fill="none"/><path d="M6 4v2.500h-2.500zM18 4v2.500h2.500zM6 20v-2.500h-2.500zM18 20v-2.500h2.500z" stroke="none"/></g></svg></div><div class="ic" style="left:955px;top:66px;"><svg viewBox="0 0 24 24"><path d="M6 18L18 6" stroke="#2fae2f" stroke-width="2.200"/><polygon points="13,4 21,3 20,11" fill="#2fae2f"/><circle cx="6" cy="18" r="3.200" fill="#d8d8d8" stroke="#666" stroke-width=".8"/></svg></div><div class="ic" style="left:981px;top:66px;"><svg viewBox="0 0 24 24"><path d="M6 15a6.500 7 0 0 1 9-9" fill="none" stroke="#2f9e2f" stroke-width="3"/><polygon points="12,2 19,6 12.500,10" fill="#2f9e2f"/><path d="M18 9a6.500 7 0 0 1-9 9" fill="none" stroke="#2f9e2f" stroke-width="3"/><polygon points="12,22 5,18 11.500,14" fill="#2f9e2f"/></svg></div><div class="ic" style="left:1006.5px;top:66px;"><svg viewBox="0 0 24 24"><clipPath id="ey9"><path d="M2 9.56 C5 3.89 9 2 13 2 C17 2 20 4.36 22 7.67 C19 9.56 15 10.5 11 10.5 C7 10.5 4 10.03 2 9.56 Z"/></clipPath><path d="M2 9.56 C5 3.89 9 2 13 2 C17 2 20 4.36 22 7.67 C19 9.56 15 10.5 11 10.5 C7 10.5 4 10.03 2 9.56 Z" fill="#bccbee"/><g clip-path="url(#ey9)"><ellipse cx="12" cy="6.34444" rx="5.8" ry="4.72222" fill="#4f70a8"/><ellipse cx="12" cy="6.15556" rx="2.6" ry="2.36111" fill="#2c4474"/><ellipse cx="11.2" cy="5.02222" rx="1.1" ry="0.85" fill="#b9d2ff"/><path d="M2 9.56 C5 3.89 9 2 13 2 C17 2 20 4.36 22 7.67" fill="none" stroke="#25314f" stroke-width="4.34444"/></g><path d="M2.3 9.18 C5 3.89 9 2 13 2 C17 2 20 4.36 22 7.67" fill="none" stroke="#222c48" stroke-width="1.500" stroke-linecap="round"/><path d="M2 9.74 C7 10.78 15 10.78 22 7.86" fill="none" stroke="#8a6a7a" stroke-width=".5"/><circle cx="12" cy="15.500" r="6" fill="#f7d23a" stroke="#b8901a" stroke-width=".7"/><circle cx="10" cy="14" r=".9" fill="#5a3a00"/><circle cx="14" cy="14" r=".9" fill="#5a3a00"/><path d="M9 17q3 2.500 6 0" fill="none" stroke="#5a3a00" stroke-width=".9"/></svg></div><div class="ic" style="left:1050px;top:66px;"><svg viewBox="0 0 24 24"><polygon points="2,13.500 10,7.500 21,11 21,16 12,21.500 2,16" fill="#dfe6f6" stroke="#a8b0c8" stroke-width=".7"/><path d="M9 14V3.500" stroke="#2a6ae0" stroke-width="1.800"/><polygon points="6.500,6 9,1.500 11.500,6" fill="#2a6ae0"/><path d="M9 14l8-5" stroke="#2fae2f" stroke-width="1.600"/><polygon points="15,7.500 19.500,7.500 17,11.500" fill="#2fae2f"/><path d="M9 14l7 5" stroke="#e02020" stroke-width="1.600"/><polygon points="14.500,20 18.500,21 16.500,16.800" fill="#e02020"/><circle cx="9" cy="14" r="1.600" fill="#ddd" stroke="#555" stroke-width=".5"/></svg></div><div class="ic" style="left:1076px;top:66px;"><svg viewBox="0 0 24 24"><polygon points="3,15 13,10 21,15 11,21" fill="#e6e9f2" stroke="#8a8fa5" stroke-width=".7"/><path d="M5 20L14 9" stroke="#2fae2f" stroke-width="2.200"/><polygon points="11,8.500 16.500,6 15.500,12" fill="#2fae2f"/><path d="M13 9V3" stroke="#2a6ae0" stroke-width="1.400"/><polygon points="11,4.500 13,1 15,4.500" fill="#2a6ae0"/><path d="M13 12l6 2" stroke="#e02020" stroke-width="1.400"/><path d="M5 20l8-2" stroke="#2fae2f" stroke-width="2.200"/></svg></div><div class="ic" style="left:1102px;top:66px;"><svg viewBox="0 0 24 24"><polygon points="8,8 17,4 22,8 13,12" fill="#e6e9f2" stroke="#8a8fa5" stroke-width=".7"/><path d="M4 20l9-8" stroke="#2fae2f" stroke-width="2.200"/><polygon points="2,17 2.500,22 7.500,21" fill="#2fae2f"/><path d="M14 9V3" stroke="#2a6ae0" stroke-width="1.300"/><polygon points="12,4.500 14,1 16,4.500" fill="#2a6ae0"/><path d="M14 9l6 3" stroke="#e02020" stroke-width="1.300"/><path d="M5 12l5 4" stroke="#2fae2f" stroke-width="2"/></svg></div><div class="ic" style="left:1145px;top:66px;"><svg viewBox="0 0 24 24"><rect x="2" y="2" width="20" height="20" fill="#9aa0b4"/><rect x="2.3" y="2.3" width="6.300" height="6.300" fill="#00d8f0"/><rect x="8.9" y="2.3" width="6.300" height="6.300" fill="#f0d800"/><rect x="15.5" y="2.3" width="6.300" height="6.300" fill="#10d020"/><rect x="2.3" y="8.9" width="6.300" height="6.300" fill="#f08000"/><rect x="8.9" y="8.9" width="6.300" height="6.300" fill="#a06820"/><rect x="15.5" y="8.9" width="6.300" height="6.300" fill="#f010d0"/><rect x="2.3" y="15.5" width="6.300" height="6.300" fill="#1020e0"/><rect x="8.9" y="15.5" width="6.300" height="6.300" fill="#10a030"/><rect x="15.5" y="15.5" width="6.300" height="6.300" fill="#909090"/></svg></div><div class="ic" style="left:1171px;top:66px;"><svg viewBox="0 0 24 24"><rect x="4.500" y="2.500" width="15" height="19" fill="#f4f6fb" stroke="#5a6a8a" stroke-width="1"/><rect x="5" y="3" width="14" height="3" fill="#6a8fd6"/><rect x="7" y="9" width="2.600" height="2.600" fill="#00d8f0"/><rect x="10.4" y="9" width="2.600" height="2.600" fill="#f0d800"/><rect x="13.8" y="9" width="2.600" height="2.600" fill="#10d020"/><rect x="7" y="12.4" width="2.600" height="2.600" fill="#f08000"/><rect x="10.4" y="12.4" width="2.600" height="2.600" fill="#a06820"/><rect x="13.8" y="12.4" width="2.600" height="2.600" fill="#f010d0"/><rect x="7" y="15.8" width="2.600" height="2.600" fill="#1020e0"/><rect x="10.4" y="15.8" width="2.600" height="2.600" fill="#10a030"/><rect x="13.8" y="15.8" width="2.600" height="2.600" fill="#909090"/></svg></div><div class="ic" style="left:1197px;top:66px;"><svg viewBox="0 0 24 24"><circle cx="12" cy="12" r="9.800" fill="#6f9440" stroke="#4c6c24" stroke-width="1"/><circle cx="12" cy="12" r="8" fill="#86ac54"/><path d="M7.500 7l9.500 10.500" stroke="#e4e4e4" stroke-width="2.600" stroke-linecap="round"/><circle cx="7.300" cy="6.800" r="2.500" fill="#e4e4e4"/><circle cx="6.300" cy="5.700" r="1.100" fill="#86ac54"/><path d="M17.500 5.500l-6 7" stroke="#d0d4dc" stroke-width="1.800"/><path d="M11.500 12.500l-5 6" stroke="#3a6ab8" stroke-width="3.200" stroke-linecap="round"/></svg></div><div class="ic" style="left:1223px;top:66px;"><svg viewBox="0 0 24 24"><rect x="3" y="3" width="18" height="18" fill="#eef2fa" stroke="#3a4a7a" stroke-width="1"/><rect x="3.500" y="3.500" width="17" height="4" fill="#3f6ac8"/><path d="M6 10h3M6 13h3M6 16h3M11 10h3" stroke="#444" stroke-width="1.200"/><path d="M11 19l8-9" stroke="#bdbdbd" stroke-width="2.200"/><path d="M19 19l-7-8" stroke="#d8d8d8" stroke-width="2"/></svg></div><div class="ic" style="left:1249px;top:66px;"><svg viewBox="0 0 24 24"><rect x="3.500" y="4.500" width="16" height="15.500" fill="none" stroke="#2a4a9a" stroke-width="1.600" stroke-dasharray="1.600 2.400"/><path d="M7 12l5-5.500 8-1.500 2 4-3 3.500-4-.5-3 3z" fill="#e8bc7c" stroke="#9a6a2a" stroke-width=".700"/><path d="M12.500 11l4-3" stroke="#9a6a2a" stroke-width=".600"/><circle cx="7.500" cy="16" r="3.400" fill="#f4e43c" stroke="#c8a81c" stroke-width=".600"/><path d="M5.500 16h4M7.500 14v4" stroke="#2a4ad0" stroke-width="1.300"/></svg></div><div class="ic" style="left:1275px;top:66px;"><svg viewBox="0 0 24 24"><polygon points="6,6 21,3.500 17,19 2,20.500" fill="#3f6ad8" stroke="#1a3a9a" stroke-width=".8"/><polygon points="7.500,7.500 19,5.500 15.800,17.500 4.300,18.800" fill="#f0a0a0"/><path d="M6.500 11.500l12-1.800M5.500 15l12-1.500M10.500 7l-3 11.500M14.500 6.300l-3 11.500" stroke="#d83030" stroke-width="1"/></svg></div><div id="vp" class="abs"></div><div class="vb" style="left:64px;top:113px;"><svg viewBox="0 0 24 24"><rect x="4" y="4.500" width="16" height="3.600" fill="#4d6590"/><rect x="4" y="10.200" width="16" height="3.600" fill="#4d6590"/><rect x="4" y="15.900" width="16" height="3.600" fill="#4d6590"/></svg></div><div class="vb" style="left:92px;top:113px;"><svg viewBox="0 0 24 24"><rect x="6.600" y="7.400" width="11.800" height="10.200" fill="url(#gdoc)" stroke="#5a5a66" stroke-width="1"/><g fill="#35c020" stroke="#35c020" stroke-width="1.300"><path d="M3.500 4l3.200 3.200M20.800 4l-3.200 3.200M3.500 21l3.200-3.200M20.800 21l-3.200-3.200" fill="none"/><path d="M7.200 5v2.700h-2.700zM17 5v2.700h2.700zM7.200 20v-2.700h-2.700zM17 20v-2.700h2.700z" stroke="none"/></g></svg></div><div class="vb" style="left:120px;top:113px;"><svg viewBox="0 0 24 24"><g opacity=".4"><path d="M8.625 12.875l-4.275 4.275" stroke="#c0c0c0" stroke-width="3.200" stroke-linecap="round"/><path d="M8.125 12.375l-4.05 4.05" stroke="#fff" stroke-width="1" stroke-linecap="round" opacity=".6"/><circle cx="12" cy="9.5" r="4.5" fill="#c9d6ea" stroke="#c4cdda" stroke-width="1.700"/><path d="M9.3 9.05a2.7 2.7 0 0 1 2.475 -2.475" fill="none" stroke="#fff" stroke-width="1.200" opacity=".8"/></g><path d="M12.1 15.4l-4.94 4.94" stroke="#d4d4d4" stroke-width="3.200" stroke-linecap="round"/><path d="M11.6 14.9l-4.68 4.68" stroke="#fff" stroke-width="1" stroke-linecap="round" opacity=".6"/><circle cx="16" cy="11.5" r="5.2" fill="#c6dcf4" stroke="#c4ccd8" stroke-width="1.700"/><path d="M12.88 10.98a3.12 3.12 0 0 1 2.86 -2.86" fill="none" stroke="#fff" stroke-width="1.200" opacity=".8"/></svg></div><div class="vb" style="left:148px;top:113px;"><svg viewBox="0 0 24 24"><polygon points="4,16 12,12 20,16 12,21" fill="#b9bcc8" stroke="#777" stroke-width=".5"/><path d="M11 16V4" stroke="#2a6ae0" stroke-width="1.800"/><polygon points="8.500,6.500 11,2 13.500,6.500" fill="#2a6ae0"/><path d="M11 16l7-6" stroke="#2fae2f" stroke-width="1.500"/><polygon points="16,9 20,8.500 18.500,12" fill="#2fae2f"/><path d="M11 16l6 5" stroke="#e02020" stroke-width="1.500"/><polygon points="15.500,21.800 19,22.500 17.500,19" fill="#e02020"/><circle cx="11" cy="16" r="1.500" fill="#eee"/></svg></div><div class="vb" style="left:176px;top:113px;"><svg viewBox="0 0 24 24"><path d="M12.2 3.3L21.6 6.7" stroke="#0a0a0a" stroke-width="1.35" stroke-linecap="round"/><path d="M21.6 6.7L21.6 16.7" stroke="#0a0a0a" stroke-width="1.35" stroke-linecap="round"/><path d="M21.6 16.7L12.2 21.3" stroke="#0a0a0a" stroke-width="1.35" stroke-linecap="round"/><path d="M12.2 21.3L3 16.7" stroke="#0a0a0a" stroke-width="1.35" stroke-linecap="round"/><path d="M3 16.7L3 6.7" stroke="#0a0a0a" stroke-width="1.35" stroke-linecap="round"/><path d="M3 6.7L12.2 3.3" stroke="#0a0a0a" stroke-width="1.35" stroke-linecap="round"/><path d="M3 6.7L12.2 10.8" stroke="#0a0a0a" stroke-width="1.35" stroke-linecap="round"/><path d="M21.6 6.7L12.2 10.8" stroke="#0a0a0a" stroke-width="1.35" stroke-linecap="round"/><path d="M12.2 10.8L12.2 21.3" stroke="#0a0a0a" stroke-width="1.35" stroke-linecap="round"/><path d="M12.2 3.3L12.2 14.2" stroke="#0a0a0a" stroke-width="1.35" stroke-linecap="round"/><path d="M12.2 14.2L3 16.7" stroke="#0a0a0a" stroke-width="1.35" stroke-linecap="round"/><path d="M12.2 14.2L21.6 16.7" stroke="#0a0a0a" stroke-width="1.35" stroke-linecap="round"/><polygon points="12.2,3.3 21.6,6.7 12.2,10.8 3,6.7" fill="url(#gGreen)" stroke="#0a0a0a" stroke-width="1.35" stroke-linejoin="round"/></svg></div><div class="vb" style="left:204px;top:113px;"><svg viewBox="0 0 24 24"><polygon points="12.2,14.2 21.6,16.7 12.2,21.3 3,16.7" fill="url(#gGreen)" stroke="#0a0a0a" stroke-width="1.35" stroke-linejoin="round"/><path d="M12.2 3.3L21.6 6.7" stroke="#0a0a0a" stroke-width="1.35" stroke-linecap="round"/><path d="M21.6 6.7L21.6 16.7" stroke="#0a0a0a" stroke-width="1.35" stroke-linecap="round"/><path d="M21.6 16.7L12.2 21.3" stroke="#0a0a0a" stroke-width="1.35" stroke-linecap="round"/><path d="M12.2 21.3L3 16.7" stroke="#0a0a0a" stroke-width="1.35" stroke-linecap="round"/><path d="M3 16.7L3 6.7" stroke="#0a0a0a" stroke-width="1.35" stroke-linecap="round"/><path d="M3 6.7L12.2 3.3" stroke="#0a0a0a" stroke-width="1.35" stroke-linecap="round"/><path d="M3 6.7L12.2 10.8" stroke="#0a0a0a" stroke-width="1.35" stroke-linecap="round"/><path d="M21.6 6.7L12.2 10.8" stroke="#0a0a0a" stroke-width="1.35" stroke-linecap="round"/><path d="M12.2 10.8L12.2 21.3" stroke="#0a0a0a" stroke-width="1.35" stroke-linecap="round"/><path d="M12.2 3.3L12.2 14.2" stroke="#0a0a0a" stroke-width="1.35" stroke-linecap="round"/><path d="M12.2 14.2L3 16.7" stroke="#0a0a0a" stroke-width="1.35" stroke-linecap="round"/><path d="M12.2 14.2L21.6 16.7" stroke="#0a0a0a" stroke-width="1.35" stroke-linecap="round"/></svg></div><div class="vb" style="left:232px;top:113px;"><svg viewBox="0 0 24 24"><polygon points="3,6.7 12.2,3.3 12.2,14.2 3,16.7" fill="url(#gGreen)" stroke="#0a0a0a" stroke-width="1.35" stroke-linejoin="round"/><path d="M12.2 3.3L21.6 6.7" stroke="#0a0a0a" stroke-width="1.35" stroke-linecap="round"/><path d="M21.6 6.7L21.6 16.7" stroke="#0a0a0a" stroke-width="1.35" stroke-linecap="round"/><path d="M21.6 16.7L12.2 21.3" stroke="#0a0a0a" stroke-width="1.35" stroke-linecap="round"/><path d="M12.2 21.3L3 16.7" stroke="#0a0a0a" stroke-width="1.35" stroke-linecap="round"/><path d="M3 16.7L3 6.7" stroke="#0a0a0a" stroke-width="1.35" stroke-linecap="round"/><path d="M3 6.7L12.2 3.3" stroke="#0a0a0a" stroke-width="1.35" stroke-linecap="round"/><path d="M3 6.7L12.2 10.8" stroke="#0a0a0a" stroke-width="1.35" stroke-linecap="round"/><path d="M21.6 6.7L12.2 10.8" stroke="#0a0a0a" stroke-width="1.35" stroke-linecap="round"/><path d="M12.2 10.8L12.2 21.3" stroke="#0a0a0a" stroke-width="1.35" stroke-linecap="round"/><path d="M12.2 3.3L12.2 14.2" stroke="#0a0a0a" stroke-width="1.35" stroke-linecap="round"/><path d="M12.2 14.2L3 16.7" stroke="#0a0a0a" stroke-width="1.35" stroke-linecap="round"/><path d="M12.2 14.2L21.6 16.7" stroke="#0a0a0a" stroke-width="1.35" stroke-linecap="round"/></svg></div><div class="vb" style="left:260px;top:113px;"><svg viewBox="0 0 24 24"><path d="M12.2 3.3L21.6 6.7" stroke="#0a0a0a" stroke-width="1.35" stroke-linecap="round"/><path d="M21.6 6.7L21.6 16.7" stroke="#0a0a0a" stroke-width="1.35" stroke-linecap="round"/><path d="M21.6 16.7L12.2 21.3" stroke="#0a0a0a" stroke-width="1.35" stroke-linecap="round"/><path d="M12.2 21.3L3 16.7" stroke="#0a0a0a" stroke-width="1.35" stroke-linecap="round"/><path d="M3 16.7L3 6.7" stroke="#0a0a0a" stroke-width="1.35" stroke-linecap="round"/><path d="M3 6.7L12.2 3.3" stroke="#0a0a0a" stroke-width="1.35" stroke-linecap="round"/><path d="M3 6.7L12.2 10.8" stroke="#0a0a0a" stroke-width="1.35" stroke-linecap="round"/><path d="M21.6 6.7L12.2 10.8" stroke="#0a0a0a" stroke-width="1.35" stroke-linecap="round"/><path d="M12.2 10.8L12.2 21.3" stroke="#0a0a0a" stroke-width="1.35" stroke-linecap="round"/><path d="M12.2 3.3L12.2 14.2" stroke="#0a0a0a" stroke-width="1.35" stroke-linecap="round"/><path d="M12.2 14.2L3 16.7" stroke="#0a0a0a" stroke-width="1.35" stroke-linecap="round"/><path d="M12.2 14.2L21.6 16.7" stroke="#0a0a0a" stroke-width="1.35" stroke-linecap="round"/><polygon points="12.2,10.8 21.6,6.7 21.6,16.7 12.2,21.3" fill="url(#gGreen)" stroke="#0a0a0a" stroke-width="1.35" stroke-linejoin="round"/></svg></div><div class="vb" style="left:288px;top:113px;"><svg viewBox="0 0 24 24"><path d="M12.2 3.3L21.6 6.7" stroke="#0a0a0a" stroke-width="1.35" stroke-linecap="round"/><path d="M21.6 6.7L21.6 16.7" stroke="#0a0a0a" stroke-width="1.35" stroke-linecap="round"/><path d="M21.6 16.7L12.2 21.3" stroke="#0a0a0a" stroke-width="1.35" stroke-linecap="round"/><path d="M12.2 21.3L3 16.7" stroke="#0a0a0a" stroke-width="1.35" stroke-linecap="round"/><path d="M3 16.7L3 6.7" stroke="#0a0a0a" stroke-width="1.35" stroke-linecap="round"/><path d="M3 6.7L12.2 3.3" stroke="#0a0a0a" stroke-width="1.35" stroke-linecap="round"/><path d="M3 6.7L12.2 10.8" stroke="#0a0a0a" stroke-width="1.35" stroke-linecap="round"/><path d="M21.6 6.7L12.2 10.8" stroke="#0a0a0a" stroke-width="1.35" stroke-linecap="round"/><path d="M12.2 10.8L12.2 21.3" stroke="#0a0a0a" stroke-width="1.35" stroke-linecap="round"/><path d="M12.2 3.3L12.2 14.2" stroke="#0a0a0a" stroke-width="1.35" stroke-linecap="round"/><path d="M12.2 14.2L3 16.7" stroke="#0a0a0a" stroke-width="1.35" stroke-linecap="round"/><path d="M12.2 14.2L21.6 16.7" stroke="#0a0a0a" stroke-width="1.35" stroke-linecap="round"/><polygon points="3,6.7 12.2,10.8 12.2,21.3 3,16.7" fill="url(#gGreen)" stroke="#0a0a0a" stroke-width="1.35" stroke-linejoin="round"/></svg></div><div class="vb" style="left:316px;top:113px;"><svg viewBox="0 0 24 24"><polygon points="12.2,3.3 21.6,6.7 21.6,16.7 12.2,14.2" fill="url(#gGreen)" stroke="#0a0a0a" stroke-width="1.35" stroke-linejoin="round"/><path d="M12.2 3.3L21.6 6.7" stroke="#0a0a0a" stroke-width="1.35" stroke-linecap="round"/><path d="M21.6 6.7L21.6 16.7" stroke="#0a0a0a" stroke-width="1.35" stroke-linecap="round"/><path d="M21.6 16.7L12.2 21.3" stroke="#0a0a0a" stroke-width="1.35" stroke-linecap="round"/><path d="M12.2 21.3L3 16.7" stroke="#0a0a0a" stroke-width="1.35" stroke-linecap="round"/><path d="M3 16.7L3 6.7" stroke="#0a0a0a" stroke-width="1.35" stroke-linecap="round"/><path d="M3 6.7L12.2 3.3" stroke="#0a0a0a" stroke-width="1.35" stroke-linecap="round"/><path d="M3 6.7L12.2 10.8" stroke="#0a0a0a" stroke-width="1.35" stroke-linecap="round"/><path d="M21.6 6.7L12.2 10.8" stroke="#0a0a0a" stroke-width="1.35" stroke-linecap="round"/><path d="M12.2 10.8L12.2 21.3" stroke="#0a0a0a" stroke-width="1.35" stroke-linecap="round"/><path d="M12.2 3.3L12.2 14.2" stroke="#0a0a0a" stroke-width="1.35" stroke-linecap="round"/><path d="M12.2 14.2L3 16.7" stroke="#0a0a0a" stroke-width="1.35" stroke-linecap="round"/><path d="M12.2 14.2L21.6 16.7" stroke="#0a0a0a" stroke-width="1.35" stroke-linecap="round"/></svg></div><div class="vb" style="left:344px;top:113px;"><svg viewBox="0 0 24 24"><polygon points="12,2.5 20.265,7.25 12,12 3.735,7.25" fill="#4de04d" stroke="#0a5a0a" stroke-width="0.6"/><polygon points="3.735,7.25 12,12 12,21.5 3.735,16.75" fill="#2cc42c" stroke="#0a5a0a" stroke-width="0.6"/><polygon points="20.265,7.25 12,12 12,21.5 20.265,16.75" fill="#17a017" stroke="#0a5a0a" stroke-width="0.6"/></svg></div><div class="vb" style="left:64px;top:141px;"><svg viewBox="0 0 24 24"><path d="M8 6.176 v11.948 a5.4 2.376 0 0 0 10.8 0 v-11.948" fill="none" stroke="#333" stroke-width="1"/><ellipse cx="13.4" cy="6.176" rx="5.4" ry="2.376" fill="none" stroke="#333" stroke-width="1"/></svg></div><div class="vb" style="left:64px;top:169px;"><svg viewBox="0 0 24 24"><path d="M8 6.176 v11.948 a5.4 2.376 0 0 0 10.8 0 v-11.948" fill="none" stroke="#333" stroke-width="1"/><ellipse cx="13.4" cy="6.176" rx="5.4" ry="2.376" fill="none" stroke="#333" stroke-width="1"/></svg></div><div class="vb" style="left:64px;top:197px;background:#9a8e55;border-color:#efc75e"><svg viewBox="0 0 24 24"><path d="M8 6.176 v11.948 a5.4 2.376 0 0 0 10.8 0 v-11.948" fill="url(#gcylb)" stroke="#1a2f66" stroke-width="0.8"/><ellipse cx="13.4" cy="6.176" rx="5.4" ry="2.376" fill="#a9c8f4" stroke="#1a2f66" stroke-width="0.8"/></svg></div><div class="vb" style="left:64px;top:225px;"><svg viewBox="0 0 24 24"><path d="M8 6.176 v11.948 a5.4 2.376 0 0 0 10.8 0 v-11.948" fill="#e8eefa" stroke="#7a88a8" stroke-width="0.9"/><ellipse cx="13.4" cy="6.176" rx="5.4" ry="2.376" fill="#f8faff" stroke="#7a88a8" stroke-width="0.9"/></svg></div><div class="vb" style="left:64px;top:253px;"><svg viewBox="0 0 24 24"><path d="M8 6.176 v11.948 a5.4 2.376 0 0 0 10.8 0 v-11.948" fill="none" stroke="#333" stroke-width="1"/><ellipse cx="13.4" cy="6.176" rx="5.4" ry="2.376" fill="none" stroke="#333" stroke-width="1"/><path d="M9 7l2.500 12M15.500 7l-3 12M12.500 6.500l-1 6 2 6M10.500 6.500l3 5.500-2.500 7" stroke="#222" stroke-width=".7" fill="none"/></svg></div><svg class="abs" style="left:0;top:0" width="1920" height="1048" viewBox="0 0 1920 1048"><defs>
<linearGradient id="mCyl" x1="0" x2="1"><stop offset="0" stop-color="#bdbdbd"/><stop offset=".18" stop-color="#cfcfcf"/><stop offset=".2" stop-color="#8a8a8a"/><stop offset=".22" stop-color="#e4e4e4"/><stop offset=".5" stop-color="#cfcfcf"/><stop offset=".84" stop-color="#989898"/><stop offset=".87" stop-color="#d8d8d8"/><stop offset="1" stop-color="#cacaca"/></linearGradient>
<linearGradient id="mRod" x1="0" x2="1"><stop offset="0" stop-color="#b9b9b9"/><stop offset=".35" stop-color="#f6f6f6"/><stop offset=".6" stop-color="#e4e4e4"/><stop offset="1" stop-color="#8e8e8e"/></linearGradient>
<linearGradient id="mKnob" x1="0" x2="1"><stop offset="0" stop-color="#5c5c5c"/><stop offset=".4" stop-color="#747474"/><stop offset="1" stop-color="#4e4e4e"/></linearGradient>
<linearGradient id="mPil" x1="0" x2="1"><stop offset="0" stop-color="#d8d49a"/><stop offset=".4" stop-color="#f4f2c8"/><stop offset="1" stop-color="#b9b57e"/></linearGradient>
<linearGradient id="mTube" x1="0" x2="1"><stop offset="0" stop-color="#5a5a5a"/><stop offset=".4" stop-color="#8a8a8a"/><stop offset="1" stop-color="#565656"/></linearGradient>
<linearGradient id="mLav" x1="0" x2="1"><stop offset="0" stop-color="#8686b6"/><stop offset=".4" stop-color="#b4b4de"/><stop offset="1" stop-color="#7676a6"/></linearGradient>
<linearGradient id="mHole" x1="0" x2="1"><stop offset="0" stop-color="#606060"/><stop offset=".5" stop-color="#fafafa"/><stop offset="1" stop-color="#8a8a8a"/></linearGradient>
<linearGradient id="mHoleD" x1="0" x2="1"><stop offset="0" stop-color="#5e5e5e"/><stop offset=".45" stop-color="#f6f6f6"/><stop offset="1" stop-color="#bdbdbd"/></linearGradient><linearGradient id="mHoleV" x1="0" y1="0" x2="0" y2="1"><stop offset="0" stop-color="#9a9a9a"/><stop offset=".5" stop-color="#f0f0f0"/><stop offset="1" stop-color="#b8b8b8"/></linearGradient>
<linearGradient id="mEdge" x1="0" x2="1"><stop offset="0" stop-color="#f0f0f0"/><stop offset="1" stop-color="#b4b4b4"/></linearGradient><linearGradient id="mEdgeR" x1="0" x2="1"><stop offset="0" stop-color="#b4b4b4"/><stop offset=".6" stop-color="#ececec"/><stop offset="1" stop-color="#c4c4c4"/></linearGradient>
</defs><polygon points="801.7,818.3 816,816.4 852.2,905.8 1120.8,896.2 1123.4,868.5 1134.3,897.2 842.3,909.1" fill="#cdcdcd" stroke="#000" stroke-width="1.15" stroke-linejoin="round" /><polygon points="842.3,909.1 1134.3,897.2 1135.3,900.6 839.4,912.5" fill="#e4e4e4" stroke="#000" stroke-width="1.15" stroke-linejoin="round" /><polygon points="801.7,818.3 842.3,909.1 839.4,912.5 800.7,820.8" fill="#f0f0f0" stroke="#000" stroke-width="1.15" stroke-linejoin="round" /><polygon points="816,786.8 816,815.5 852.3,904.2 852.3,826.9 836.1,826.9" fill="#c9c9c9" stroke="#000" stroke-width="1.15" stroke-linejoin="round" /><polygon points="831,470 1087,462 1100,740 850,745" fill="#5c5b00" stroke="none" stroke-width="1.15" stroke-linejoin="round" /><polygon points="803.5,421 821,456 821,790 803,743" fill="#cbcbcb" stroke="#000" stroke-width="1.2" stroke-linejoin="round" /><polygon points="821,456 831.5,472 831.5,812 821,790" fill="#b9b9b9" stroke="#000" stroke-width="1.2" stroke-linejoin="round" /><polygon points="802.6,742.9 802.6,748.3 836.1,836.8 839.3,826.9" fill="#dedede" stroke="#000" stroke-width="1.15" stroke-linejoin="round" /><ellipse cx="811" cy="481" rx="3.6" ry="22" fill="url(#mHole)" stroke="#000" stroke-width="1" /><ellipse cx="811" cy="539" rx="3.6" ry="22" fill="url(#mHole)" stroke="#000" stroke-width="1" /><ellipse cx="811" cy="596.25" rx="3.6" ry="21.75" fill="url(#mHole)" stroke="#000" stroke-width="1" /><ellipse cx="811" cy="654.5" rx="3.6" ry="22" fill="url(#mHole)" stroke="#000" stroke-width="1" /><ellipse cx="811" cy="713" rx="3.6" ry="22" fill="url(#mHole)" stroke="#000" stroke-width="1" /><ellipse cx="815" cy="509" rx="0.8" ry="1.2" fill="#000" stroke="none" stroke-width="0" /><ellipse cx="815" cy="567" rx="0.8" ry="1.2" fill="#000" stroke="none" stroke-width="0" /><ellipse cx="815" cy="625" rx="0.8" ry="1.2" fill="#000" stroke="none" stroke-width="0" /><ellipse cx="815" cy="683" rx="0.8" ry="1.2" fill="#000" stroke="none" stroke-width="0" /><polygon points="1085,464 1102.5,462 1102.5,764 1086,731" fill="#cfcfcf" stroke="#000" stroke-width="1.15" stroke-linejoin="round" /><polygon points="1104,462 1116,455 1116,700 1108.5,764 1104,764" fill="#c4c4c4" stroke="#000" stroke-width="1.2" stroke-linejoin="round" /><ellipse cx="1093.5" cy="645" rx="3.6" ry="22" fill="url(#mHole)" stroke="#000" stroke-width="1" /><ellipse cx="1093.5" cy="702" rx="3.6" ry="22" fill="url(#mHole)" stroke="#000" stroke-width="1" /><rect x="832" y="474" width="12" height="154" fill="#c9c596" stroke="#000" stroke-width="0.8" /><rect x="1088" y="466" width="14" height="134" fill="#c9c596" stroke="#000" stroke-width="0.8" /><rect x="832" y="627" width="12" height="57" fill="url(#mRod)" stroke="#000" stroke-width="0.8" /><polygon points="833.9,480.3 850.1,479.8 853.9,489.8 853.9,498.9 833.9,499.4" fill="#52b45c" stroke="#000" stroke-width="0.9" stroke-linejoin="round" /><polygon points="833.9,480.3 850.1,479.8 853.5,488.9 833.9,489.4" fill="#62c86c" stroke="#000" stroke-width="0.6" stroke-linejoin="round" /><polygon points="833.4,537 844.9,538.5 853,541.3 853,547.1 833.9,547.1" fill="#52b45c" stroke="#000" stroke-width="0.9" stroke-linejoin="round" /><polygon points="833.9,499.6 853.9,499.2 853.9,540.9 833.9,537.3" fill="#8c8cb6" stroke="#000" stroke-width="0.9" stroke-linejoin="round" /><polygon points="834.4,502.2 844.9,501.8 844.9,537.5 834.4,537.5" fill="#a6a6ce" stroke="#000" stroke-width="0.8" stroke-linejoin="round" /><polygon points="835.4,507 843,506.5 843,531.8 835.4,531.8" fill="#9494c0" stroke="#000" stroke-width="0.6" stroke-linejoin="round" /><polygon points="846.8,502.7 853.9,502.2 853.9,540.4 846.8,541.3" fill="#7c7ca8" stroke="#000" stroke-width="0.8" stroke-linejoin="round" /><polygon points="854.4,508 860.1,525.1 860.1,544.2 854.4,544.2" fill="#9090b8" stroke="#000" stroke-width="0.8" stroke-linejoin="round" /><polygon points="852,482.2 862.1,480.8 869.2,498.9 855.9,499.4" fill="#9494bc" stroke="#000" stroke-width="0.9" stroke-linejoin="round" /><polygon points="855.9,499.9 869.2,499.4 874.9,525.6 861.1,527" fill="#a6a6ce" stroke="#000" stroke-width="0.9" stroke-linejoin="round" /><polygon points="860.6,528 874.9,527 873,543.2 860.6,543.7" fill="#8686b2" stroke="#000" stroke-width="0.9" stroke-linejoin="round" /><polygon points="1073.8,472.4 1083.9,471.4 1086.7,479.1 1098.2,478.6 1098.2,489.6 1078.6,490 1075.3,480.5" fill="#52b45c" stroke="#000" stroke-width="0.9" stroke-linejoin="round" /><polygon points="1073.8,472.4 1083.9,471.4 1086.7,479.1 1078.6,480.2" fill="#62c86c" stroke="#000" stroke-width="0.6" stroke-linejoin="round" /><polygon points="1086.7,532.5 1098.2,530.6 1098.2,537.7 1086.7,537.7" fill="#52b45c" stroke="#000" stroke-width="0.9" stroke-linejoin="round" /><polygon points="1088.1,491.9 1098.2,491 1098.2,531 1088.1,536.3" fill="#8a8ab0" stroke="#000" stroke-width="0.9" stroke-linejoin="round" /><polygon points="1089.6,498.1 1097.2,497.7 1097.2,522.9 1089.6,523.9" fill="#70708e" stroke="#000" stroke-width="0.7" stroke-linejoin="round" /><polygon points="1081.9,492.4 1088.1,491.9 1088.1,536.3 1086.7,536.8 1086.7,518.2" fill="#7c7ca8" stroke="#000" stroke-width="0.8" stroke-linejoin="round" /><polygon points="1057.6,474.8 1073.4,473.4 1081.5,491.9 1066.7,492.9" fill="#9494bc" stroke="#000" stroke-width="0.9" stroke-linejoin="round" /><polygon points="1057.6,474.8 1066.7,492.9 1071.9,519.1 1069.6,519.9 1058.1,491.5" fill="#7c7ca8" stroke="#000" stroke-width="0.8" stroke-linejoin="round" /><polygon points="1066.7,492.9 1081.5,492.2 1086.7,518.2 1071.9,519.3" fill="#a6a6ce" stroke="#000" stroke-width="0.9" stroke-linejoin="round" /><polygon points="1071.9,519.6 1086.7,518.4 1086.7,536.8 1080.5,537.2" fill="#8686b2" stroke="#000" stroke-width="0.9" stroke-linejoin="round" /><path d="M864,735 L1086,730 L1101.500,764 L1110,764 L1110,816 Q1136,814 1136.500,822 Q1137,829 1124,832.500 L855,841.500 Q841,841 840,832 Q839,826 852,824.500 L864,824 Z" fill="#cfcfcf" stroke="#000" stroke-width="1.15" stroke-linejoin="round" /><path d="M840,832 Q841,841.500 855,841.500 L1124,832.500 Q1137,829 1136.500,822 L1136.500,812 Q1134,817 1122,818.500 L853,827.500 Q842,827 840,832Z" fill="#e0e0e0" stroke="#000" stroke-width="1.15" stroke-linejoin="round" opacity="0"/><polygon points="840.4,827 1124.4,817.5 1135.3,817.1 1136.2,823 1124.4,832.9 855.2,841.8 841.4,837.9" fill="#c9c9c9" stroke="#000" stroke-width="1.2" stroke-linejoin="round" /><polygon points="840.4,827 855.2,829 855.2,841.8 841.4,837.9" fill="url(#mEdge)" stroke="#000" stroke-width="1.15" stroke-linejoin="round" /><polygon points="1124.4,817.5 1135.3,817.1 1136.2,823 1124.4,832.9" fill="url(#mEdgeR)" stroke="#000" stroke-width="1.15" stroke-linejoin="round" /><polygon points="881.9,742.9 1025.4,737.5 1037.3,765.2 893.8,770.6" fill="#b4b4b4" stroke="#000" stroke-width="1.15" stroke-linejoin="round" /><polygon points="881.9,742.9 1025.4,737.5 1022.4,747.8 885.9,752.2" fill="#cdcdcd" stroke="#000" stroke-width="1.15" stroke-linejoin="round" /><polygon points="1025.4,737.5 1037.3,765.2 1031.4,765.6 1021.9,747.8" fill="#c4c4c4" stroke="#000" stroke-width="1.15" stroke-linejoin="round" /><path d="M885.9 752.2L1022.4 747.8" fill="none" stroke="#000" stroke-width="0.8" stroke-linejoin="round" /><path d="M1021.9 747.8L1022.4 766.6" fill="none" stroke="#000" stroke-width="0.8" stroke-linejoin="round" /><ellipse cx="897.8" cy="781.1" rx="2.2" ry="1" fill="#111" stroke="none" stroke-width="0" /><ellipse cx="926.5" cy="779.9" rx="2.2" ry="1" fill="#111" stroke="none" stroke-width="0" /><ellipse cx="955.2" cy="778.9" rx="2.2" ry="1" fill="#111" stroke="none" stroke-width="0" /><ellipse cx="983.5" cy="777.9" rx="2.2" ry="1" fill="#111" stroke="none" stroke-width="0" /><ellipse cx="1012" cy="776.9" rx="2.2" ry="1" fill="#111" stroke="none" stroke-width="0" /><ellipse cx="1040.9" cy="775.9" rx="2.2" ry="1" fill="#111" stroke="none" stroke-width="0" /><ellipse cx="901.7" cy="789.8" rx="2.2" ry="1" fill="#111" stroke="none" stroke-width="0" /><ellipse cx="930" cy="788.8" rx="2.2" ry="1" fill="#111" stroke="none" stroke-width="0" /><ellipse cx="958.7" cy="787.8" rx="2.2" ry="1" fill="#111" stroke="none" stroke-width="0" /><ellipse cx="987.2" cy="786.8" rx="2.2" ry="1" fill="#111" stroke="none" stroke-width="0" /><ellipse cx="1015.9" cy="785.8" rx="2.2" ry="1" fill="#111" stroke="none" stroke-width="0" /><ellipse cx="1044.6" cy="784.8" rx="2.2" ry="1" fill="#111" stroke="none" stroke-width="0" /><ellipse cx="905.7" cy="798.9" rx="2.2" ry="1" fill="#111" stroke="none" stroke-width="0" /><ellipse cx="934" cy="797.9" rx="2.2" ry="1" fill="#111" stroke="none" stroke-width="0" /><ellipse cx="962.5" cy="796.9" rx="2.2" ry="1" fill="#111" stroke="none" stroke-width="0" /><ellipse cx="991" cy="795.9" rx="2.2" ry="1" fill="#111" stroke="none" stroke-width="0" /><ellipse cx="1019.5" cy="794.9" rx="2.2" ry="1" fill="#111" stroke="none" stroke-width="0" /><ellipse cx="1048.2" cy="793.9" rx="2.2" ry="1" fill="#111" stroke="none" stroke-width="0" /><ellipse cx="878.4" cy="747.4" rx="2.2" ry="1" fill="#111" stroke="none" stroke-width="0" /><ellipse cx="885.3" cy="766" rx="2.2" ry="1" fill="#111" stroke="none" stroke-width="0" /><ellipse cx="1033.7" cy="741.9" rx="2.2" ry="1" fill="#111" stroke="none" stroke-width="0" /><ellipse cx="1040.9" cy="760.3" rx="2.2" ry="1" fill="#111" stroke="none" stroke-width="0" /><ellipse cx="950.2" cy="767.2" rx="2.2" ry="1" fill="#111" stroke="none" stroke-width="0" /><ellipse cx="1092.7" cy="773.9" rx="4" ry="2" fill="#e6e6e6" stroke="#000" stroke-width="0.8" /><rect x="876.4" y="626" width="8.6" height="76" fill="url(#mRod)" stroke="#000" stroke-width="0.8" /><ellipse cx="879.75" cy="704" rx="7.15" ry="4" fill="#e9e9e9" stroke="#000" stroke-width="0.9" /><ellipse cx="879.75" cy="703" rx="4.65" ry="2.2" fill="#f6f6f6" stroke="#000" stroke-width="0.5" /><rect x="1052" y="672" width="7.6" height="25" fill="url(#mRod)" stroke="#000" stroke-width="0.8" /><ellipse cx="1055.2" cy="698" rx="7.2" ry="4.5" fill="#e9e9e9" stroke="#000" stroke-width="0.9" /><ellipse cx="1055.2" cy="697" rx="4.7" ry="2.7" fill="#f6f6f6" stroke="#000" stroke-width="0.5" /><rect x="1072" y="560" width="11.4" height="178" fill="url(#mRod)" stroke="#000" stroke-width="0.8" /><ellipse cx="1077.5" cy="738" rx="7.5" ry="2.6" fill="#f0f0f0" stroke="#000" stroke-width="0.8" /><rect x="887.8" y="676" width="7.7" height="55" fill="url(#mRod)" stroke="#000" stroke-width="0.8" /><ellipse cx="891.65" cy="731.5" rx="7.65" ry="4.5" fill="#e9e9e9" stroke="#000" stroke-width="0.9" /><ellipse cx="891.65" cy="730.5" rx="5.15" ry="2.7" fill="#f6f6f6" stroke="#000" stroke-width="0.5" /><rect x="1063.4" y="671" width="8.6" height="54" fill="url(#mRod)" stroke="#000" stroke-width="0.8" /><ellipse cx="1067.2" cy="725.5" rx="7.6" ry="4.5" fill="#e9e9e9" stroke="#000" stroke-width="0.9" /><ellipse cx="1067.2" cy="724.5" rx="5.1" ry="2.7" fill="#f6f6f6" stroke="#000" stroke-width="0.5" /><rect x="935.8" y="674" width="7.2" height="18" fill="url(#mLav)" stroke="#000" stroke-width="0.7" /><polygon points="935.8,692 943,692 940.6,697 938.2,697" fill="#222" stroke="#000" stroke-width="0.5" stroke-linejoin="round" /><rect x="938.2" y="697" width="2.4" height="9" fill="#b8b8b8" stroke="#000" stroke-width="0.5" /><path d="M939.4 706V712" fill="none" stroke="#999" stroke-width="1.2" stroke-linejoin="round" /><rect x="947.6" y="676" width="2.6" height="18" fill="#a8a8c8" stroke="#000" stroke-width="0.6" /><rect x="952.9" y="674" width="7.2" height="24" fill="url(#mLav)" stroke="#000" stroke-width="0.7" /><polygon points="952.9,698 960.1,698 957.7,703 955.3,703" fill="#222" stroke="#000" stroke-width="0.5" stroke-linejoin="round" /><rect x="955.3" y="703" width="2.4" height="9" fill="#b8b8b8" stroke="#000" stroke-width="0.5" /><path d="M956.5 712V718" fill="none" stroke="#999" stroke-width="1.2" stroke-linejoin="round" /><rect x="967.6" y="676" width="2.6" height="18" fill="#a8a8c8" stroke="#000" stroke-width="0.6" /><rect x="974.9" y="674" width="7.2" height="25" fill="url(#mLav)" stroke="#000" stroke-width="0.7" /><polygon points="974.9,699 982.1,699 979.7,704 977.3,704" fill="#222" stroke="#000" stroke-width="0.5" stroke-linejoin="round" /><rect x="977.3" y="704" width="2.4" height="9" fill="#b8b8b8" stroke="#000" stroke-width="0.5" /><path d="M978.5 713V719" fill="none" stroke="#999" stroke-width="1.2" stroke-linejoin="round" /><rect x="989.6" y="676" width="2.6" height="18" fill="#a8a8c8" stroke="#000" stroke-width="0.6" /><rect x="994.9" y="674" width="7.2" height="23" fill="url(#mLav)" stroke="#000" stroke-width="0.7" /><polygon points="994.9,697 1002.1,697 999.7,702 997.3,702" fill="#222" stroke="#000" stroke-width="0.5" stroke-linejoin="round" /><rect x="997.3" y="702" width="2.4" height="9" fill="#b8b8b8" stroke="#000" stroke-width="0.5" /><path d="M998.5 711V717" fill="none" stroke="#999" stroke-width="1.2" stroke-linejoin="round" /><rect x="1004.4" y="674" width="7.2" height="17" fill="url(#mLav)" stroke="#000" stroke-width="0.7" /><polygon points="1004.4,691 1011.6,691 1009.2,696 1006.8,696" fill="#222" stroke="#000" stroke-width="0.5" stroke-linejoin="round" /><rect x="1006.8" y="696" width="2.4" height="9" fill="#b8b8b8" stroke="#000" stroke-width="0.5" /><path d="M1008 705V711" fill="none" stroke="#999" stroke-width="1.2" stroke-linejoin="round" /><path d="M868.8 617.3 L1059.6 611.5 L1080.6 659.3 L892.6 667.8 Z M904.1 623.9 L1033.9 619.2 L1047.2 651.6 L917.4 659.3 Z" fill="#d0d0d0" stroke="#000" stroke-width="1" fill-rule="evenodd"/><polygon points="904.1,623.9 1033.9,619.2 1031.6,627.2 907.5,632.2" fill="#bcbcbc" stroke="#000" stroke-width="0.8" stroke-linejoin="round" /><polygon points="904.1,623.9 907.5,632.2 919.3,658.3 917.4,659.3" fill="#c8c8c8" stroke="#000" stroke-width="0.8" stroke-linejoin="round" /><polygon points="892.6,667.8 1080.6,659.3 1080.6,669.2 892.6,676.8" fill="#d6d6d6" stroke="#000" stroke-width="1.15" stroke-linejoin="round" /><polygon points="868.8,617.3 892.6,667.8 892.6,676.8 869.7,627.2" fill="#e2e2e2" stroke="#000" stroke-width="1.15" stroke-linejoin="round" /><ellipse cx="923.2" cy="620.7" rx="1.8" ry="0.9" fill="#111" stroke="none" stroke-width="0" /><ellipse cx="1030.1" cy="617.3" rx="1.8" ry="0.9" fill="#111" stroke="none" stroke-width="0" /><ellipse cx="939.4" cy="659.6" rx="1.8" ry="0.9" fill="#111" stroke="none" stroke-width="0" /><ellipse cx="960.4" cy="658.9" rx="1.8" ry="0.9" fill="#111" stroke="none" stroke-width="0" /><ellipse cx="982.3" cy="657.7" rx="1.8" ry="0.9" fill="#111" stroke="none" stroke-width="0" /><ellipse cx="1003.3" cy="657" rx="1.8" ry="0.9" fill="#111" stroke="none" stroke-width="0" /><ellipse cx="1025.3" cy="656.4" rx="1.8" ry="0.9" fill="#111" stroke="none" stroke-width="0" /><ellipse cx="1045.3" cy="628.7" rx="1.8" ry="0.9" fill="#111" stroke="none" stroke-width="0" /><ellipse cx="1049.1" cy="636" rx="1.8" ry="0.9" fill="#111" stroke="none" stroke-width="0" /><ellipse cx="1052" cy="643.2" rx="1.8" ry="0.9" fill="#111" stroke="none" stroke-width="0" /><ellipse cx="1054.9" cy="649.7" rx="1.8" ry="0.9" fill="#111" stroke="none" stroke-width="0" /><ellipse cx="909.8" cy="647.8" rx="1.8" ry="0.9" fill="#111" stroke="none" stroke-width="0" /><ellipse cx="905" cy="654.5" rx="1.8" ry="0.9" fill="#111" stroke="none" stroke-width="0" /><rect x="905" y="633.5" width="6.7" height="11.4" fill="#ececec" stroke="#000" stroke-width="0.8" rx="2"/><rect x="911.7" y="648.8" width="6.1" height="8.5" fill="#ececec" stroke="#000" stroke-width="0.8" rx="2"/><rect x="1032.9" y="631.6" width="8.6" height="10.5" fill="#ececec" stroke="#000" stroke-width="0.8" rx="2"/><rect x="1038.6" y="644.9" width="9.6" height="9.6" fill="#ececec" stroke="#000" stroke-width="0.8" rx="2"/><rect x="1027.2" y="619.2" width="9.5" height="8.6" fill="#ececec" stroke="#000" stroke-width="0.8" rx="2"/><polygon points="927.9,569.5 988.1,569.5 988.1,588.6 985.2,613.4 930.8,613.4 925.1,602 925.1,577.2" fill="#a9dca9" stroke="#000" stroke-width="0.8" stroke-linejoin="round" /><path d="M932.7 571.5V613.4" fill="none" stroke="#000" stroke-width="0.6" stroke-linejoin="round" /><path d="M936.5 639.2V656.4A4.8 1.5 0 0 0 946.1 656.4V639.2Z" fill="url(#mPil)" stroke="#000" stroke-width="0.7"/><ellipse cx="941.3" cy="639.2" rx="4.8" ry="1.5" fill="#f2efc4" stroke="#000" stroke-width="0.7" /><path d="M946.1 630.6V654.5A3.3 1.5 0 0 0 952.7 654.5V630.6Z" fill="url(#mPil)" stroke="#000" stroke-width="0.7"/><ellipse cx="949.4" cy="630.6" rx="3.3" ry="1.5" fill="#f2efc4" stroke="#000" stroke-width="0.7" /><path d="M952.7 646.9V656.4A4.3 1.5 0 0 0 961.3 656.4V646.9Z" fill="url(#mPil)" stroke="#000" stroke-width="0.7"/><ellipse cx="957" cy="646.9" rx="4.3" ry="1.5" fill="#f2efc4" stroke="#000" stroke-width="0.7" /><path d="M964.8 625.9V650.7A4.95 1.5 0 0 0 974.7 650.7V625.9Z" fill="url(#mPil)" stroke="#000" stroke-width="0.7"/><ellipse cx="969.75" cy="625.9" rx="4.95" ry="1.5" fill="#f2efc4" stroke="#000" stroke-width="0.7" /><path d="M974.7 649.7V655.4A3.8 1.5 0 0 0 982.3 655.4V649.7Z" fill="url(#mPil)" stroke="#000" stroke-width="0.7"/><ellipse cx="978.5" cy="649.7" rx="3.8" ry="1.5" fill="#f2efc4" stroke="#000" stroke-width="0.7" /><path d="M987.1 628.7V653.5A4.3 1.5 0 0 0 995.7 653.5V628.7Z" fill="url(#mPil)" stroke="#000" stroke-width="0.7"/><ellipse cx="991.4" cy="628.7" rx="4.3" ry="1.5" fill="#f2efc4" stroke="#000" stroke-width="0.7" /><path d="M994.7 646.9V655.4A4.3 1.5 0 0 0 1003.3 655.4V646.9Z" fill="url(#mPil)" stroke="#000" stroke-width="0.7"/><ellipse cx="999" cy="646.9" rx="4.3" ry="1.5" fill="#f2efc4" stroke="#000" stroke-width="0.7" /><path d="M1003.3 638.3V655.4A5.55 1.5 0 0 0 1014.4 655.4V638.3Z" fill="url(#mPil)" stroke="#000" stroke-width="0.7"/><ellipse cx="1008.85" cy="638.3" rx="5.55" ry="1.5" fill="#f2efc4" stroke="#000" stroke-width="0.7" /><rect x="937.9" y="615.4" width="6.4" height="24.8" fill="#5a5a78" stroke="#000" stroke-width="0.6" /><rect x="938.3" y="615.695" width="5.6" height="3.54286" fill="#b0b0d4" stroke="#000" stroke-width="0.4" /><rect x="936.6" y="619.829" width="9" height="3.54286" fill="#1c1c28" stroke="#000" stroke-width="0.4" /><rect x="938.3" y="623.962" width="5.6" height="3.54286" fill="#b0b0d4" stroke="#000" stroke-width="0.4" /><rect x="936.6" y="628.095" width="9" height="3.54286" fill="#1c1c28" stroke="#000" stroke-width="0.4" /><rect x="938.3" y="632.229" width="5.6" height="3.54286" fill="#b0b0d4" stroke="#000" stroke-width="0.4" /><rect x="936.6" y="636.362" width="9" height="3.54286" fill="#1c1c28" stroke="#000" stroke-width="0.4" /><ellipse cx="941.1" cy="639.2" rx="3" ry="1.2" fill="#2fae4f" stroke="#000" stroke-width="0.4" /><rect x="947.534" y="602.9" width="4.032" height="28.1" fill="#5a5a78" stroke="#000" stroke-width="0.6" /><rect x="947.786" y="603.235" width="3.528" height="4.01429" fill="#b0b0d4" stroke="#000" stroke-width="0.4" /><rect x="946.715" y="607.918" width="5.67" height="4.01429" fill="#1c1c28" stroke="#000" stroke-width="0.4" /><rect x="947.786" y="612.601" width="3.528" height="4.01429" fill="#b0b0d4" stroke="#000" stroke-width="0.4" /><rect x="946.715" y="617.285" width="5.67" height="4.01429" fill="#1c1c28" stroke="#000" stroke-width="0.4" /><rect x="947.786" y="621.968" width="3.528" height="4.01429" fill="#b0b0d4" stroke="#000" stroke-width="0.4" /><rect x="946.715" y="626.651" width="5.67" height="4.01429" fill="#1c1c28" stroke="#000" stroke-width="0.4" /><ellipse cx="949.55" cy="630" rx="1.89" ry="1.2" fill="#2fae4f" stroke="#000" stroke-width="0.4" /><rect x="954.32" y="623" width="5.76" height="24.4" fill="#5a5a78" stroke="#000" stroke-width="0.6" /><rect x="954.68" y="623.29" width="5.04" height="3.48571" fill="#b0b0d4" stroke="#000" stroke-width="0.4" /><rect x="953.15" y="627.357" width="8.1" height="3.48571" fill="#1c1c28" stroke="#000" stroke-width="0.4" /><rect x="954.68" y="631.424" width="5.04" height="3.48571" fill="#b0b0d4" stroke="#000" stroke-width="0.4" /><rect x="953.15" y="635.49" width="8.1" height="3.48571" fill="#1c1c28" stroke="#000" stroke-width="0.4" /><rect x="954.68" y="639.557" width="5.04" height="3.48571" fill="#b0b0d4" stroke="#000" stroke-width="0.4" /><rect x="953.15" y="643.624" width="8.1" height="3.48571" fill="#1c1c28" stroke="#000" stroke-width="0.4" /><ellipse cx="957.2" cy="646.4" rx="2.7" ry="1.2" fill="#2fae4f" stroke="#000" stroke-width="0.4" /><rect x="966.976" y="599.1" width="5.248" height="27.7" fill="#5a5a78" stroke="#000" stroke-width="0.6" /><rect x="967.304" y="599.43" width="4.592" height="3.95714" fill="#b0b0d4" stroke="#000" stroke-width="0.4" /><rect x="965.91" y="604.046" width="7.38" height="3.95714" fill="#1c1c28" stroke="#000" stroke-width="0.4" /><rect x="967.304" y="608.663" width="4.592" height="3.95714" fill="#b0b0d4" stroke="#000" stroke-width="0.4" /><rect x="965.91" y="613.28" width="7.38" height="3.95714" fill="#1c1c28" stroke="#000" stroke-width="0.4" /><rect x="967.304" y="617.896" width="4.592" height="3.95714" fill="#b0b0d4" stroke="#000" stroke-width="0.4" /><rect x="965.91" y="622.513" width="7.38" height="3.95714" fill="#1c1c28" stroke="#000" stroke-width="0.4" /><ellipse cx="969.6" cy="625.8" rx="2.46" ry="1.2" fill="#2fae4f" stroke="#000" stroke-width="0.4" /><rect x="976.576" y="623" width="5.248" height="26.7" fill="#5a5a78" stroke="#000" stroke-width="0.6" /><rect x="976.904" y="623.318" width="4.592" height="3.81429" fill="#b0b0d4" stroke="#000" stroke-width="0.4" /><rect x="975.51" y="627.768" width="7.38" height="3.81429" fill="#1c1c28" stroke="#000" stroke-width="0.4" /><rect x="976.904" y="632.218" width="4.592" height="3.81429" fill="#b0b0d4" stroke="#000" stroke-width="0.4" /><rect x="975.51" y="636.668" width="7.38" height="3.81429" fill="#1c1c28" stroke="#000" stroke-width="0.4" /><rect x="976.904" y="641.118" width="4.592" height="3.81429" fill="#b0b0d4" stroke="#000" stroke-width="0.4" /><rect x="975.51" y="645.568" width="7.38" height="3.81429" fill="#1c1c28" stroke="#000" stroke-width="0.4" /><ellipse cx="979.2" cy="648.7" rx="2.46" ry="1.2" fill="#2fae4f" stroke="#000" stroke-width="0.4" /><rect x="989.068" y="601" width="4.864" height="28.1" fill="#5a5a78" stroke="#000" stroke-width="0.6" /><rect x="989.372" y="601.335" width="4.256" height="4.01429" fill="#b0b0d4" stroke="#000" stroke-width="0.4" /><rect x="988.08" y="606.018" width="6.84" height="4.01429" fill="#1c1c28" stroke="#000" stroke-width="0.4" /><rect x="989.372" y="610.701" width="4.256" height="4.01429" fill="#b0b0d4" stroke="#000" stroke-width="0.4" /><rect x="988.08" y="615.385" width="6.84" height="4.01429" fill="#1c1c28" stroke="#000" stroke-width="0.4" /><rect x="989.372" y="620.068" width="4.256" height="4.01429" fill="#b0b0d4" stroke="#000" stroke-width="0.4" /><rect x="988.08" y="624.751" width="6.84" height="4.01429" fill="#1c1c28" stroke="#000" stroke-width="0.4" /><ellipse cx="991.5" cy="628.1" rx="2.28" ry="1.2" fill="#2fae4f" stroke="#000" stroke-width="0.4" /><rect x="997.14" y="619.2" width="5.12" height="27.7" fill="#5a5a78" stroke="#000" stroke-width="0.6" /><rect x="997.46" y="619.53" width="4.48" height="3.95714" fill="#b0b0d4" stroke="#000" stroke-width="0.4" /><rect x="996.1" y="624.146" width="7.2" height="3.95714" fill="#1c1c28" stroke="#000" stroke-width="0.4" /><rect x="997.46" y="628.763" width="4.48" height="3.95714" fill="#b0b0d4" stroke="#000" stroke-width="0.4" /><rect x="996.1" y="633.38" width="7.2" height="3.95714" fill="#1c1c28" stroke="#000" stroke-width="0.4" /><rect x="997.46" y="637.996" width="4.48" height="3.95714" fill="#b0b0d4" stroke="#000" stroke-width="0.4" /><rect x="996.1" y="642.613" width="7.2" height="3.95714" fill="#1c1c28" stroke="#000" stroke-width="0.4" /><ellipse cx="999.7" cy="645.9" rx="2.4" ry="1.2" fill="#2fae4f" stroke="#000" stroke-width="0.4" /><rect x="1005.52" y="613.4" width="6.464" height="25.2" fill="#5a5a78" stroke="#000" stroke-width="0.6" /><rect x="1005.92" y="613.7" width="5.656" height="3.6" fill="#b0b0d4" stroke="#000" stroke-width="0.4" /><rect x="1004.21" y="617.9" width="9.09" height="3.6" fill="#1c1c28" stroke="#000" stroke-width="0.4" /><rect x="1005.92" y="622.1" width="5.656" height="3.6" fill="#b0b0d4" stroke="#000" stroke-width="0.4" /><rect x="1004.21" y="626.3" width="9.09" height="3.6" fill="#1c1c28" stroke="#000" stroke-width="0.4" /><rect x="1005.92" y="630.5" width="5.656" height="3.6" fill="#b0b0d4" stroke="#000" stroke-width="0.4" /><rect x="1004.21" y="634.7" width="9.09" height="3.6" fill="#1c1c28" stroke="#000" stroke-width="0.4" /><ellipse cx="1008.75" cy="637.6" rx="3.03" ry="1.2" fill="#2fae4f" stroke="#000" stroke-width="0.4" /><rect x="935.6" y="568.6" width="11.4" height="47.1" fill="url(#mTube)" stroke="#000" stroke-width="0.7" /><rect x="947" y="568.6" width="6.7" height="34.9" fill="url(#mTube)" stroke="#000" stroke-width="0.7" /><rect x="953.3" y="569.9" width="9" height="53.5" fill="url(#mTube)" stroke="#000" stroke-width="0.7" /><rect x="966.1" y="568.6" width="8.6" height="31.1" fill="url(#mTube)" stroke="#000" stroke-width="0.7" /><rect x="975.1" y="570.7" width="8.8" height="52.7" fill="url(#mTube)" stroke="#000" stroke-width="0.7" /><rect x="987.7" y="568.6" width="8" height="32.4" fill="url(#mTube)" stroke="#000" stroke-width="0.7" /><rect x="995.7" y="570.3" width="8.6" height="49.3" fill="url(#mTube)" stroke="#000" stroke-width="0.7" /><rect x="1003.7" y="568.6" width="11.1" height="45.2" fill="url(#mTube)" stroke="#000" stroke-width="0.7" /><rect x="874.5" y="556" width="10.5" height="43" fill="url(#mPil)" stroke="#000" stroke-width="0.8" /><rect x="1045.3" y="560" width="11.4" height="52" fill="url(#mPil)" stroke="#000" stroke-width="0.8" /><path d="M892.6 565V663A5.7 1.6 0 0 0 904 663V565Z" fill="url(#mPil)" stroke="#000" stroke-width="0.8"/><path d="M1063.4 560V657.5A6.2 1.6 0 0 0 1075.8 657.5V560Z" fill="url(#mPil)" stroke="#000" stroke-width="0.8"/><path d="M876.4 598V626A4.3 1.6 0 0 0 885 626V598Z" fill="url(#mRod)" stroke="#000" stroke-width="0.95"/><ellipse cx="880.7" cy="598" rx="4.3" ry="1.6" fill="#f4f4f4" stroke="#000" stroke-width="0.95" /><path d="M1052.5 592V621A3.75 1.6 0 0 0 1060 621V592Z" fill="url(#mRod)" stroke="#000" stroke-width="0.95"/><ellipse cx="1056.25" cy="592" rx="3.75" ry="1.6" fill="#f4f4f4" stroke="#000" stroke-width="0.95" /><polygon points="870.7,496.9 1056.8,493.1 1083.5,552.2 886.9,558" fill="#d3d3d3" stroke="#000" stroke-width="1.15" stroke-linejoin="round" /><polygon points="886.9,558 1083.5,552.2 1083.5,562.7 899.3,570.4 884,563.7" fill="#cecece" stroke="#000" stroke-width="1.15" stroke-linejoin="round" /><polygon points="870.7,496.9 886.9,558 884,563.7 873.5,540.8" fill="#e6e6e6" stroke="#000" stroke-width="1.15" stroke-linejoin="round" /><polygon points="1072,554.2 1083.5,552.2 1083.5,562.7 1072,564.1" fill="url(#mEdge)" stroke="#000" stroke-width="0.6" stroke-linejoin="round" /><polygon points="884,559.9 899.3,558 899.3,570.4 884,563.7" fill="url(#mEdge)" stroke="#000" stroke-width="0.6" stroke-linejoin="round" /><ellipse cx="880.8" cy="511.6" rx="5.34351" ry="2.09924" fill="url(#mHoleD)" stroke="#000" stroke-width="0.8" /><ellipse cx="892.6" cy="521.7" rx="10.4962" ry="4.58015" fill="url(#mHoleD)" stroke="#000" stroke-width="0.8" /><ellipse cx="898.3" cy="532.2" rx="11.4504" ry="4.96183" fill="url(#mHoleD)" stroke="#000" stroke-width="0.8" /><ellipse cx="904.1" cy="543.7" rx="12.9771" ry="5.72519" fill="url(#mHoleD)" stroke="#000" stroke-width="0.8" /><ellipse cx="1052" cy="505.9" rx="5.34351" ry="2.09924" fill="url(#mHoleD)" stroke="#000" stroke-width="0.8" /><ellipse cx="1051" cy="516" rx="10.4962" ry="4.19847" fill="url(#mHoleD)" stroke="#000" stroke-width="0.8" /><ellipse cx="1054.9" cy="527.4" rx="11.4504" ry="4.96183" fill="url(#mHoleD)" stroke="#000" stroke-width="0.8" /><ellipse cx="1056.8" cy="538.9" rx="13.3588" ry="5.72519" fill="url(#mHoleD)" stroke="#000" stroke-width="0.8" /><ellipse cx="898.3" cy="555.7" rx="4.77099" ry="1.71756" fill="url(#mHoleD)" stroke="#000" stroke-width="0.8" /><ellipse cx="1070.1" cy="550" rx="4.77099" ry="1.71756" fill="url(#mHoleD)" stroke="#000" stroke-width="0.8" /><polygon points="910.8,472.1 1010,469.2 1011.9,479.7 917.4,483.5" fill="#e2e2e2" stroke="#000" stroke-width="0.8" stroke-linejoin="round" /><polygon points="908.8,486.4 1029.1,481.6 1043.4,514.1 922.2,521.7" fill="#d0d0d0" stroke="#000" stroke-width="1.15" stroke-linejoin="round" /><polygon points="908.8,486.4 922.2,521.7 922.2,549.4 908.8,504.5" fill="#a8a8c4" stroke="#000" stroke-width="1.15" stroke-linejoin="round" /><polygon points="922.2,521.7 1042.5,515 1042.5,542.7 922.2,549.4" fill="#bab78a" stroke="#000" stroke-width="1.15" stroke-linejoin="round" /><ellipse cx="914.6" cy="489.3" rx="3.8" ry="1.7" fill="#f4f4f4" stroke="#000" stroke-width="0.7" /><ellipse cx="922.2" cy="501.7" rx="3.8" ry="1.7" fill="#f4f4f4" stroke="#000" stroke-width="0.7" /><ellipse cx="938.4" cy="496.9" rx="3.8" ry="1.7" fill="#f4f4f4" stroke="#000" stroke-width="0.7" /><ellipse cx="943.2" cy="504.5" rx="3.8" ry="1.7" fill="#f4f4f4" stroke="#000" stroke-width="0.7" /><ellipse cx="958.5" cy="509.9" rx="3.8" ry="1.7" fill="#f4f4f4" stroke="#000" stroke-width="0.7" /><ellipse cx="979.5" cy="511.2" rx="3.8" ry="1.7" fill="#f4f4f4" stroke="#000" stroke-width="0.7" /><ellipse cx="1000.5" cy="508.7" rx="3.8" ry="1.7" fill="#f4f4f4" stroke="#000" stroke-width="0.7" /><ellipse cx="1008.1" cy="494.6" rx="3.8" ry="1.7" fill="#f4f4f4" stroke="#000" stroke-width="0.7" /><ellipse cx="1011" cy="502.6" rx="3.8" ry="1.7" fill="#f4f4f4" stroke="#000" stroke-width="0.7" /><ellipse cx="1026.2" cy="490.2" rx="3.8" ry="1.7" fill="#f4f4f4" stroke="#000" stroke-width="0.7" /><ellipse cx="1031" cy="498.4" rx="3.8" ry="1.7" fill="#f4f4f4" stroke="#000" stroke-width="0.7" /><ellipse cx="1033.9" cy="506.8" rx="3.8" ry="1.7" fill="#f4f4f4" stroke="#000" stroke-width="0.7" /><ellipse cx="1036.7" cy="511.4" rx="3.8" ry="1.7" fill="#f4f4f4" stroke="#000" stroke-width="0.7" /><ellipse cx="921.3" cy="494.6" rx="3.8" ry="1.7" fill="#f4f4f4" stroke="#000" stroke-width="0.7" /><ellipse cx="925.1" cy="509.3" rx="3.8" ry="1.7" fill="#f4f4f4" stroke="#000" stroke-width="0.7" /><ellipse cx="1037.7" cy="530.3" rx="1.8" ry="2" fill="#111" stroke="none" stroke-width="0" /><polygon points="946.1,472.1 957.5,471.1 963.2,493.1 949.9,494" fill="#8a8a8a" stroke="#000" stroke-width="0.8" stroke-linejoin="round" /><ellipse cx="976.6" cy="497.8" rx="14" ry="4.5" fill="#e8e8e8" stroke="#000" stroke-width="0.8" /><ellipse cx="976.6" cy="498.8" rx="8" ry="2.5" fill="#bcbcbc" stroke="#000" stroke-width="0.6" /><path d="M957.5 474.9V490.2A19.1 6 0 0 0 995.7 490.2V474.9Z" fill="#5a5a5a" stroke="#000" stroke-width="0.9"/><ellipse cx="976.6" cy="474.9" rx="19.1" ry="6" fill="#8c8c9c" stroke="#000" stroke-width="0.9" /><ellipse cx="976.6" cy="474" rx="12" ry="3.6" fill="#b8b8c8" stroke="#000" stroke-width="0.7" /><ellipse cx="976.6" cy="474" rx="5" ry="1.8" fill="#555" stroke="#000" stroke-width="0.6" /><rect x="836" y="690" width="6" height="136" fill="#4a4a4a" stroke="#000" stroke-width="0.6" /><rect x="841.5" y="687" width="22.5" height="139" fill="#bdb98c" stroke="#000" stroke-width="0.9" /><rect x="841.5" y="687" width="5" height="139" fill="#dcd9a6" stroke="#000" stroke-width="0.6" /><polygon points="841.5,687 864,687 861.5,683 844,683" fill="#2e8b3e" stroke="#000" stroke-width="0.7" stroke-linejoin="round" /><path d="M846 669V686A4.25 1.5 0 0 0 854.5 686V669Z" fill="#f2f2f2" stroke="#000" stroke-width="0.7"/><ellipse cx="850.25" cy="669" rx="4.25" ry="1.5" fill="#fff" stroke="#000" stroke-width="0.7" /><rect x="1110" y="678" width="25" height="142" fill="#bdb98c" stroke="#000" stroke-width="0.9" /><rect x="1110" y="678" width="6.5" height="142" fill="#dcd9a6" stroke="#000" stroke-width="0.6" /><rect x="1133" y="672" width="4" height="28" fill="#222" stroke="#000" stroke-width="0.3" /><polygon points="1110,678 1135,678 1133,674 1112,674" fill="#2e8b3e" stroke="#000" stroke-width="0.7" stroke-linejoin="round" /><path d="M1119.7 659V676.5A4.75 1.5 0 0 0 1129.2 676.5V659Z" fill="#f2f2f2" stroke="#000" stroke-width="0.7"/><ellipse cx="1124.45" cy="659" rx="4.75" ry="1.5" fill="#fff" stroke="#000" stroke-width="0.7" /><polygon points="852.2,842.8 860.8,843.2 860.8,906.1 852.2,905.8" fill="#6e6a2c" stroke="#000" stroke-width="1.15" stroke-linejoin="round" /><polygon points="1114.5,834.3 1120.8,834.1 1120.8,896.2 1114.5,896.8" fill="#6e6a2c" stroke="#000" stroke-width="1.15" stroke-linejoin="round" /><polygon points="860.8,843.2 1114.5,834.3 1114.5,896.8 860.8,906.1" fill="#b6b6b6" stroke="#000" stroke-width="1.15" stroke-linejoin="round" /><ellipse cx="865.7" cy="851.1" rx="1.6" ry="1.6" fill="#6a6a2a" stroke="#000" stroke-width="0.6" /><ellipse cx="865.7" cy="892.3" rx="1.6" ry="1.6" fill="#6a6a2a" stroke="#000" stroke-width="0.6" /><ellipse cx="1108.9" cy="842.8" rx="1.6" ry="1.6" fill="#6a6a2a" stroke="#000" stroke-width="0.6" /><ellipse cx="1108.9" cy="884" rx="1.6" ry="1.6" fill="#6a6a2a" stroke="#000" stroke-width="0.6" /><ellipse cx="987.4" cy="867.9" rx="14" ry="14" fill="#1f8a34" stroke="#000" stroke-width="1" /><ellipse cx="987.4" cy="868.4" rx="10.5" ry="11" fill="#8b0000" stroke="#000" stroke-width="0.9" /><ellipse cx="845.5" cy="858.5" rx="3.8" ry="13" fill="#14822a" stroke="#000" stroke-width="0.8" /><ellipse cx="844.3" cy="858.5" rx="3" ry="11.5" fill="#22a83c" stroke="#000" stroke-width="0.5" /><ellipse cx="843.6" cy="858.5" rx="2" ry="9.5" fill="#2cc04a" stroke="#000" stroke-width="0.4" /><ellipse cx="815.2" cy="832.3" rx="2.4" ry="1.1" fill="#fff" stroke="#000" stroke-width="0.6" /><ellipse cx="838.6" cy="890.3" rx="2.4" ry="1.1" fill="#fff" stroke="#000" stroke-width="0.6" /><ellipse cx="1123.6" cy="880.8" rx="2.4" ry="1.1" fill="#fff" stroke="#000" stroke-width="0.6" /><path d="M805.8,419.6 L1100,408.2 Q1103.500,408 1104.500,411 L1118.500,446 Q1120,452.500 1112,455.800 Q1105,457 1087,457.300 L837.300,466.300 Q826,466 821,455.800 Z" fill="#cecece" stroke="#000" stroke-width="1.2" stroke-linejoin="round" /><path d="M821,455.800 Q826,466 837.300,466.300 L1087,457.300 Q1105,457 1112,455.800 Q1120,452.500 1118.500,446 L1118.700,453 Q1118,460 1104,462.500 L1085.300,464 L861,472.400 L831.500,472 Q824,466 821,455.800Z" fill="#bcbcbc" stroke="#000" stroke-width="1.2" stroke-linejoin="round" /><path d="M821,455.800 Q826,466 837.300,466.300 L861,466 L861,472.400 L831.500,472 Q824,466 821,455.800Z" fill="url(#mEdge)" stroke="#000" stroke-width="0.7" stroke-linejoin="round" /><path d="M1087,457.300 Q1105,457 1112,455.800 Q1120,452.500 1118.500,446 L1118.700,453 Q1118,460 1104,462.500 L1085.300,464Z" fill="url(#mEdgeR)" stroke="#000" stroke-width="0.7" stroke-linejoin="round" /><polygon points="805.8,419.6 821,455.9 819.1,456.8 805.8,426.3" fill="#ececec" stroke="#000" stroke-width="0.7" stroke-linejoin="round" /><clipPath id="ch893"><ellipse cx="893.5" cy="439.2" rx="37.2" ry="11.9"/></clipPath><ellipse cx="893.5" cy="439.2" rx="37.2" ry="11.9" fill="url(#mHole)" stroke="#000" stroke-width="1" /><ellipse cx="894.5" cy="446.2" rx="36.2" ry="10.9" fill="#5c5b00" stroke="#000" stroke-width=".8" clip-path="url(#ch893)"/><clipPath id="ch1036"><ellipse cx="1036.7" cy="433.9" rx="36.3" ry="11.5"/></clipPath><ellipse cx="1036.7" cy="433.9" rx="36.3" ry="11.5" fill="url(#mHole)" stroke="#000" stroke-width="1" /><ellipse cx="1037.7" cy="440.9" rx="35.3" ry="10.5" fill="#5c5b00" stroke="#000" stroke-width=".8" clip-path="url(#ch1036)"/><ellipse cx="837.3" cy="422.4" rx="9.54198" ry="3.43511" fill="url(#mHoleD)" stroke="#000" stroke-width="0.9" /><ellipse cx="1076.8" cy="414.4" rx="9.54198" ry="3.43511" fill="url(#mHoleD)" stroke="#000" stroke-width="0.9" /><ellipse cx="815.3" cy="420.2" rx="4.19847" ry="1.52672" fill="url(#mHoleD)" stroke="#000" stroke-width="0.9" /><ellipse cx="819.1" cy="432.9" rx="4.19847" ry="1.52672" fill="url(#mHoleD)" stroke="#000" stroke-width="0.9" /><ellipse cx="824.9" cy="445.7" rx="4.19847" ry="1.52672" fill="url(#mHoleD)" stroke="#000" stroke-width="0.9" /><ellipse cx="1097.8" cy="409.7" rx="3.81679" ry="1.33588" fill="url(#mHoleD)" stroke="#000" stroke-width="0.9" /><ellipse cx="1103.5" cy="422.8" rx="4.19847" ry="1.52672" fill="url(#mHoleD)" stroke="#000" stroke-width="0.9" /><ellipse cx="1108.3" cy="435.4" rx="4.19847" ry="1.52672" fill="url(#mHoleD)" stroke="#000" stroke-width="0.9" /><polygon points="940.3,425.3 948,440 949.9,459.1 942.2,445.4" fill="#444" stroke="#000" stroke-width="1.15" stroke-linejoin="round" /><polygon points="940.3,425.3 996.6,424.4 999.5,438.7 948,440" fill="#5c5c5c" stroke="#000" stroke-width="1.15" stroke-linejoin="round" /><polygon points="948,440 999.5,438.7 999.5,456.8 949.9,459.1" fill="#646464" stroke="#000" stroke-width="1.15" stroke-linejoin="round" /><rect x="946" y="343" width="51.4" height="95.5" fill="url(#mCyl)" stroke="#000" stroke-width="0.9" /><polygon points="942.3,310.7 949,327.8 949.7,345.3 943.4,329.3" fill="#444" stroke="#000" stroke-width="1.15" stroke-linejoin="round" /><polygon points="942.3,310.7 996.2,308.1 1002.6,324.1 949,327.8" fill="#5c5c5c" stroke="#000" stroke-width="1.15" stroke-linejoin="round" /><polygon points="949,327.8 1002.6,324.1 1002.6,341.6 949.7,345.3" fill="#666666" stroke="#000" stroke-width="1.15" stroke-linejoin="round" /><path d="M958.7 309V317A13.3 4.5 0 0 0 985.3 317V309Z" fill="#5a5a5a" stroke="#000" stroke-width="0.9"/><ellipse cx="972" cy="309" rx="13.3" ry="4.5" fill="#686868" stroke="#000" stroke-width="0.9" /><path d="M965.7 240V308.5A6.9 2.2 0 0 0 979.5 308.5V240Z" fill="url(#mRod)" stroke="#000" stroke-width="0.8"/><path d="M959 185.5V238A14 3.8 0 0 0 987 238V185.5Z" fill="url(#mKnob)" stroke="#000" stroke-width="0.9"/><ellipse cx="973" cy="185.5" rx="14" ry="3.8" fill="#707070" stroke="#000" stroke-width="0.9" /><g opacity=".86" fill="#f4861a" stroke="none"><path d="M891.500 512h2.600v22.500l9 3v2.500l-11.600-3.800z M896.500 508h2.600v23l5 1.800v2.400l-7.600-2.600z M936 512h-2.600v22.500l-9 3v2.500l11.600-3.800z M931 508h-2.600v23l-5 1.800v2.400l7.600-2.600z"/><path d="M906.500 517.500a9.500 9.500 0 1 0 15.500 -3.200l-2.600 1.800a6.400 6.400 0 1 1 -10.400 2.400z"/><path d="M908.500 514.500l5.800 12.500 8.500-17.500-3.200-1-5.300 11-2.900-6.200z"/><text x="946.500" y="529.500" font-family="'Liberation Sans','Noto Sans CJK SC',sans-serif" font-size="16.800" font-weight="500" fill="#f4861a" textLength="82.500" lengthAdjust="spacingAndGlyphs">智造资料网</text><text x="947.500" y="538" font-family="'Liberation Sans',sans-serif" font-size="5.200" font-weight="bold" fill="#f4861a" textLength="81" lengthAdjust="spacingAndGlyphs">INTELLIGENT MANUFACTURING DATA</text></g><g><polygon points="117,909.500 119.500,916.500 145.500,916.500 145.500,940 119.500,940 117,936" fill="#8a93b5" fill-opacity=".45" stroke="#d8d8d8" stroke-width=".8"/><polygon points="119.500,934 142,933 145,940 119.500,941" fill="#8c9a70" stroke="#e8e020" stroke-width="1"/><path d="M120 941L114 926" stroke="#1fc01f" stroke-width="2.400"/><ellipse cx="114" cy="929" rx="2.500" ry="3.500" fill="#1fc01f"/><path d="M120 941V880" stroke="#12c6d2" stroke-width="2.600"/><polygon points="116,880 120,870 124.500,880" fill="#1fe0ea"/><path d="M120 941.500H148" stroke="#e01010" stroke-width="2.600"/><polygon points="146,937.500 155,941.500 146,945.500" fill="#c00808"/><circle cx="120" cy="942" r="3.600" fill="#777" stroke="#444" stroke-width=".6"/><text x="115.700" y="867.800" font-family="'Liberation Sans',sans-serif" font-size="12.200" fill="#d8d8d8">Z</text><text x="156.600" y="945" font-family="'Liberation Sans',sans-serif" font-size="12.500" fill="#e01010">X</text><text x="107.500" y="928" font-family="'Liberation Sans',sans-serif" font-size="12" fill="#e01010">Y</text><text x="1107" y="1000.800" font-family="'Liberation Sans',sans-serif" font-size="12.500" fill="#d4d0c8">Z</text></g></svg><svg class="abs" style="left:1720px;top:780px" width="200" height="150" viewBox="1720 780 200 150"><defs><linearGradient id="wRing" x1="0" y1="0" x2="0" y2="1"><stop offset="0" stop-color="#4fd0c8"/><stop offset="1" stop-color="#d8e050"/></linearGradient>
<radialGradient id="wDisc" cx=".5" cy=".4" r=".6"><stop offset="0" stop-color="#3a4560"/><stop offset="1" stop-color="#222a40"/></radialGradient></defs><rect x="1818" y="863" width="85" height="41" rx="20" fill="#1d2438"/><path d="M1840 883.500H1902" stroke="#2c3550" stroke-width="1"/><circle cx="1813" cy="883" r="29" fill="#2a3147"/><circle cx="1813" cy="883" r="27.500" fill="url(#wDisc)"/><path d="M1832 865 A26 26 0 0 1 1814 909" fill="none" stroke="url(#wRing)" stroke-width="1.600"/><text x="1797" y="891.500" font-family="'DejaVu Sans','Liberation Sans',sans-serif" font-size="24" font-weight="200" fill="#e4e6ee" textLength="27.500" lengthAdjust="spacingAndGlyphs">50</text><text x="1825" y="891" font-family="'Liberation Sans',sans-serif" font-size="9" fill="#e4e6ee">%</text><path d="M1849.500 876v-5M1847.300 873l2.200-2.400 2.200 2.400" stroke="#49a6e8" stroke-width="1.300" fill="none"/><path d="M1849.500 891v5M1847.300 894l2.200 2.400 2.200-2.400" stroke="#2fb82f" stroke-width="1.300" fill="none"/><text x="1872" y="877" font-family="'Liberation Sans',sans-serif" font-size="10.500" font-weight="bold" fill="#f0f0f0">0</text><text x="1879" y="877" font-family="'Liberation Sans',sans-serif" font-size="9.500" fill="#c4c8d2" textLength="14.500">K/s</text><text x="1872" y="898" font-family="'Liberation Sans',sans-serif" font-size="10.500" font-weight="bold" fill="#f0f0f0">0</text><text x="1879" y="898" font-family="'Liberation Sans',sans-serif" font-size="9.500" fill="#c4c8d2" textLength="14.500">K/s</text><rect x="1748" y="794" width="156" height="70" rx="8" fill="#b9d9ee"/><rect x="1750" y="796" width="150" height="14" rx="6" fill="#1676b8"/><rect x="1731" y="799.500" width="170" height="58" rx="7" fill="#fff" stroke="#1a7cc0" stroke-width="1.400"/><text x="1743" y="825" font-family="'Liberation Sans',sans-serif" font-size="21.500" fill="#000" font-weight="bold" textLength="17" lengthAdjust="spacingAndGlyphs">A</text><path d="M1780.500 811 C1789 811 1791.500 820 1787 824.500 C1783 828.500 1776.500 827.500 1774.200 824 C1780 825 1784 821 1783.500 817 C1783.200 814 1782 812 1780.500 811 Z" fill="#000"/><path d="M1746 838.500q1.500 .5 .2 3" stroke="#000" stroke-width="1.600" fill="none"/><circle cx="1758.800" cy="850" r="1.100" fill="#000"/><path d="M1772 839l5-1.500q3.500 2 7 0l5 1.500 1 6-3.500 1v6.500h-12v-6.500l-3.500-1z" fill="#000"/><circle cx="1893.500" cy="822.500" r="4.800" fill="#e60020"/><path d="M1869.63 828.1 C1877.65 822.75 1888.34 824.09 1893.68 832.1 C1899.02 838.78 1903.03 849.47 1900.36 861.5 L1840.24 865.5 L1853.6 846.8 Z" fill="#1290e0" stroke="#5c4a3a" stroke-width=".55"/><path d="M1897.69 840.79 C1907.04 839.45 1916.39 849.47 1917.06 856.15 C1916.39 862.83 1907.04 863.5 1899.02 860.16 C1903.03 854.82 1901.7 846.8 1897.69 840.79 Z" fill="#fff" stroke="#5c4a3a" stroke-width=".55"/><path d="M1813.52 808.06 C1821.54 797.37 1834.9 792.69 1846.92 794.03 C1861.62 796.03 1873.64 809.39 1873.64 825.42 C1873.64 842.79 1866.96 856.15 1856.27 865.5 C1848.26 870.85 1840.24 868.18 1837.57 864.17 C1826.88 860.16 1812.18 836.11 1813.52 808.06 Z" fill="#1290e0" stroke="#5c4a3a" stroke-width=".55"/><path d="M1807.51 846.8 C1805.5 854.82 1813.52 860.16 1826.88 858.82 L1840.24 864.17 C1829.55 854.82 1818.86 846.8 1807.51 846.8 Z" fill="#1290e0" stroke="#5c4a3a" stroke-width=".55"/><path d="M1816.19 808.72 C1825.54 802.71 1840.24 802.71 1852.26 810.73 C1864.29 820.08 1865.62 836.11 1858.94 846.8 C1848.26 858.82 1826.88 854.82 1816.19 844.13 C1805.5 833.44 1806.84 816.07 1816.19 808.72 Z" fill="#fff" stroke="#5c4a3a" stroke-width=".55"/><path d="M1823.54 850.14 C1826.88 854.15 1829.55 856.15 1832.22 857.49" fill="none" stroke="#c8181e" stroke-width="1.800"/><path d="M1861.62 848.8 C1866.96 845.46 1869.63 841.46 1870.97 838.12" fill="none" stroke="#c8181e" stroke-width="1.800"/><ellipse cx="1835.97" cy="804.315" rx="7.600" ry="8.200" fill="#fff" stroke="#5c4a3a" stroke-width=".55" transform="rotate(-18 1835.97 804.315)"/><ellipse cx="1849.33" cy="810.461" rx="7" ry="8.600" fill="#fff" stroke="#5c4a3a" stroke-width=".55" transform="rotate(-18 1849.33 810.461)"/><path d="M1832.89 805.38 Q1836.9 810.06 1840.91 806.05" fill="none" stroke="#000" stroke-width="1"/><ellipse cx="1843.98" cy="810.461" rx="1.900" ry="2.700" fill="#000" transform="rotate(-15 1843.98 810.461)"/><ellipse cx="1844.25" cy="810.06" rx=".7" ry="1.100" fill="#fff"/><circle cx="1834.9" cy="814.469" r="4.500" fill="#e60020" stroke="#5c4a3a" stroke-width=".4"/><circle cx="1835.97" cy="813.4" r="1.300" fill="#fff"/><path d="M1810.85 832.77 C1824.21 842.79 1846.92 842.79 1860.28 831.44" fill="none" stroke="#5c4a3a" stroke-width=".55"/><path d="M1833.56 819.01 Q1828.22 829.43 1825.54 838.78" fill="none" stroke="#5c4a3a" stroke-width=".55"/><path d="M1812.18 810.06 L1824.21 815.4 M1809.51 815 L1823.54 817.68 M1809.25 819.41 L1822.61 820.08 M1840.91 824.76 L1860.95 823.42 M1840.24 827.43 L1860.95 831.44 M1839.57 830.77 L1856.27 840.79" fill="none" stroke="#5c4a3a" stroke-width=".55"/><path d="M1806.84 837.45 C1808.18 834.11 1813.52 834.78 1816.19 838.78 C1820.2 842.79 1821.54 846.13 1817.53 846.8 C1812.18 846.8 1806.17 842.79 1806.84 837.45 Z" fill="#fff" stroke="#5c4a3a" stroke-width=".55"/><ellipse cx="1848.52" cy="854.148" rx="8.800" ry="7.200" fill="#fff" stroke="#5c4a3a" stroke-width=".55"/><circle cx="1832.89" cy="859.092" r="4.700" fill="#f2d21e" stroke="#8a6a10" stroke-width=".6"/><path d="M1828.48 858.16 L1837.3 857.49" fill="none" stroke="#8a6a10" stroke-width=".5"/><circle cx="1831.96" cy="860.16" r="1.100" fill="#5a3a10"/></svg><div id="left" class="abs"><div class="hgrip" style="top:3px"></div><div class="hgrip" style="top:256px"></div></div><div class="ic" style="left:5px;top:131px;"><svg viewBox="0 0 24 24"><g opacity=".4"><path d="M8.625 12.875l-4.275 4.275" stroke="#b0b0b0" stroke-width="3.200" stroke-linecap="round"/><path d="M8.125 12.375l-4.05 4.05" stroke="#fff" stroke-width="1" stroke-linecap="round" opacity=".6"/><circle cx="12" cy="9.5" r="4.5" fill="#c9d6ea" stroke="#aab3c2" stroke-width="1.700"/><path d="M9.3 9.05a2.7 2.7 0 0 1 2.475 -2.475" fill="none" stroke="#fff" stroke-width="1.200" opacity=".8"/></g><path d="M12.025 15.475l-5.035 5.035" stroke="#b4b4b4" stroke-width="3.200" stroke-linecap="round"/><path d="M11.525 14.975l-4.77 4.77" stroke="#fff" stroke-width="1" stroke-linecap="round" opacity=".6"/><circle cx="16" cy="11.5" r="5.3" fill="#c6dcf4" stroke="#8a9ab4" stroke-width="1.700"/><path d="M12.82 10.97a3.18 3.18 0 0 1 2.915 -2.915" fill="none" stroke="#fff" stroke-width="1.200" opacity=".8"/></svg></div><div class="ic" style="left:5px;top:157px;"><svg viewBox="0 0 24 24"><rect x="5.500" y="7" width="13" height="10.500" fill="url(#gdoc)" stroke="#5a5a66" stroke-width="1"/><g fill="#35c020" stroke="#35c020" stroke-width="1.300"><path d="M2.500 3.500l3.200 3.200M21.500 3.500l-3.200 3.200M2.500 21l3.200-3.200M21.500 21l-3.200-3.200" fill="none"/><path d="M6.200 4.500v2.700h-2.700zM17.800 4.500v2.700h2.700zM6.200 20v-2.700h-2.700zM17.800 20v-2.700h2.700z" stroke="none"/></g></svg></div><div class="ic" style="left:5px;top:183px;"><svg viewBox="0 0 24 24"><polygon points="18,11 22.785,13.75 18,16.5 13.215,13.75" fill="#a8a8a8" stroke="#2a2a2a" stroke-width="0.5"/><polygon points="13.215,13.75 18,16.5 18,22 13.215,19.25" fill="#6e6e6e" stroke="#2a2a2a" stroke-width="0.5"/><polygon points="22.785,13.75 18,16.5 18,22 22.785,19.25" fill="#484848" stroke="#2a2a2a" stroke-width="0.5"/><path d="M10.875 12.625l-5.225 5.225" stroke="#8d8f96" stroke-width="3.200" stroke-linecap="round"/><path d="M10.375 12.125l-4.95 4.95" stroke="#fff" stroke-width="1" stroke-linecap="round" opacity=".6"/><circle cx="15" cy="8.5" r="5.5" fill="#c4d6ee" stroke="#8a93a3" stroke-width="1.700"/><path d="M11.7 7.95a3.3 3.3 0 0 1 3.025 -3.025" fill="none" stroke="#fff" stroke-width="1.200" opacity=".8"/><polygon points="13.500,5.500 18,8.500 13.500,11.500" fill="#8a98b0"/><path d="M2.500 4.500h4.500M4.750 2.200v4.600M2.500 9h4.500" stroke="#111" stroke-width="1.100"/><polygon points="17,2.500 22,2.500 19.500,5.200" fill="#000"/></svg></div><div class="ic" style="left:5px;top:209px;"><svg viewBox="0 0 24 24"><polygon points="3,14 13,9 21,14 11,20" fill="#e6e9f2" stroke="#8a8fa5" stroke-width=".7"/><path d="M9 14V3.500" stroke="#2a6ae0" stroke-width="1.800"/><polygon points="6.500,6 9,1.500 11.500,6" fill="#2a6ae0"/><path d="M9 14l8-5" stroke="#2fae2f" stroke-width="1.600"/><polygon points="15,7.500 19.500,7.500 17,11.500" fill="#2fae2f"/><path d="M9 14l7 5" stroke="#e02020" stroke-width="1.600"/><polygon points="14.500,20 18.500,21 16.500,16.800" fill="#e02020"/><circle cx="9" cy="14" r="1.600" fill="#ddd" stroke="#555" stroke-width=".5"/><polygon points="17,2.500 22,2.500 19.500,5.200" fill="#000"/></svg></div><div class="ic" style="left:5px;top:235px;"><svg viewBox="0 0 24 24"><path d="M3 4l9-1 4 2-9 1z" fill="#8aa0f0"/><path d="M3 7.500l9-1 4 2-9 1z" fill="#e6e6ee" stroke="#888" stroke-width=".4"/><path d="M3 11l9-1 4 2-9 1z" fill="#f4f4f4" stroke="#888" stroke-width=".4"/><ellipse cx="12.500" cy="17" rx="8" ry="4.800" fill="#c9a27a" stroke="#7a5a3a" stroke-width=".7"/><circle cx="9" cy="18" r="1.900" fill="#2450e0"/><circle cx="13.500" cy="18.800" r="1.900" fill="#20b020"/><circle cx="16.500" cy="15.500" r="1.900" fill="#d02020"/><path d="M21 3L14 14" stroke="#b46a22" stroke-width="1.800"/><polygon points="17,2.500 22,2.500 19.500,5.200" fill="#000"/></svg></div><div class="ic" style="left:5px;top:261px;"><svg viewBox="0 0 24 24"><path d="M5 11.5 a7 6.65 0 0 1 12.5 -1.5" fill="none" stroke="#4c86d8" stroke-width="3.4"/><polygon points="14.5,10.5 22.3,10 18.7,16" fill="#4c86d8"/><path d="M19 13.5 a7 6.65 0 0 1 -12.5 1.5" fill="none" stroke="#7fb0ee" stroke-width="3.4"/><polygon points="9.5,14.5 1.7,15 5.3,9" fill="#7fb0ee"/><polygon points="17,2.500 22,2.500 19.500,5.200" fill="#000"/></svg></div><div class="ic" style="left:5px;top:287px;"><svg viewBox="0 0 24 24"><ellipse cx="12" cy="21" rx="5" ry="1.500" fill="#b8bcc8"/><path d="M7.500 8q0-5 4.500-5t4.500 4.500q0 3-3.800 4.500v2.500" fill="none" stroke="#3f6ad0" stroke-width="3"/><circle cx="12.600" cy="18.500" r="1.800" fill="#3f6ad0"/><polygon points="17,2.500 22,2.500 19.500,5.200" fill="#000"/></svg></div><div class="ic" style="left:5px;top:313px;"><svg viewBox="0 0 24 24"><path d="M6 8l1.500 13h9L18 8z" fill="#bfe3ee" stroke="#5a8a9a" stroke-width=".8"/><ellipse cx="12" cy="8" rx="6" ry="2" fill="#e4f4f8" stroke="#5a8a9a" stroke-width=".8"/><path d="M10 5l2-3 2 3" fill="#f0d840" stroke="#8a7a10" stroke-width=".6"/><path d="M9 12l1 7M12 12v7M15 12l-1 7" stroke="#8fc3d0" stroke-width=".8"/><path d="M10 14q2-2 4 0q-2 3-4 0" fill="#3a3" opacity=".6"/><polygon points="17,2.500 22,2.500 19.500,5.200" fill="#000"/></svg></div><div class="ic" style="left:5px;top:339px;"><svg viewBox="0 0 24 24"><circle cx="13" cy="13" r="7" fill="none" stroke="#8a4a1a" stroke-width="2"/><circle cx="13" cy="13" r="2.200" fill="#e8902a"/><path d="M13 3v20M3 13h20M6 6l14 14M20 6L6 20" stroke="#8a4a1a" stroke-width="1.200"/><path d="M3 3v17" stroke="#4a6ad0" stroke-width="2"/><path d="M2 19l8 3M6 17l9 4" stroke="#f08a1a" stroke-width="2"/><polygon points="17,2.500 22,2.500 19.500,5.200" fill="#000"/></svg></div><div class="ic" style="left:31.5px;top:131px;"><svg viewBox="0 0 24 24"><path d="M3 4l15 16M5 14q6-6 14 2" stroke="#3f6ad0" stroke-width="1.500" fill="none"/><ellipse cx="9" cy="20.5" rx="6" ry="1.500" fill="#000" opacity=".22"/><path d="M7.30477 17.366L19 4" stroke="#6e4a14" stroke-width="3.800"/><path d="M7.30477 17.366L17.2879 5.9567" stroke="#d9a448" stroke-width="2.400"/><path d="M7.6058 17.6294L17.5889 6.2201" stroke="#f0cf80" stroke-width=".800"/><path d="M17.4196 5.80618L18.8024 4.22577" stroke="#e03030" stroke-width="2.600"/><polygon points="5,20 8.85696,18.3255 6.14768,15.9549" fill="#e8c890" stroke="#6e4a14" stroke-width=".500"/><path d="M5 20L5.85606 19.0217" stroke="#3a2a10" stroke-width="1.200"/><polygon points="17,2.500 22,2.500 19.500,5.200" fill="#000"/></svg></div><div class="ic" style="left:31.5px;top:157px;"><svg viewBox="0 0 24 24"><path d="M4 9q0-5 5-3t6 8q3 5 5 0t-5-3" stroke="#3f6ad0" stroke-width="1.700" fill="none"/><ellipse cx="9" cy="20.5" rx="6" ry="1.500" fill="#000" opacity=".22"/><path d="M7.30477 17.366L19 4" stroke="#6e4a14" stroke-width="3.800"/><path d="M7.30477 17.366L17.2879 5.9567" stroke="#d9a448" stroke-width="2.400"/><path d="M7.6058 17.6294L17.5889 6.2201" stroke="#f0cf80" stroke-width=".800"/><path d="M17.4196 5.80618L18.8024 4.22577" stroke="#e03030" stroke-width="2.600"/><polygon points="5,20 8.85696,18.3255 6.14768,15.9549" fill="#e8c890" stroke="#6e4a14" stroke-width=".500"/><path d="M5 20L5.85606 19.0217" stroke="#3a2a10" stroke-width="1.200"/><polygon points="17,2.500 22,2.500 19.500,5.200" fill="#000"/></svg></div><div class="ic" style="left:31.5px;top:183px;"><svg viewBox="0 0 24 24"><path d="M5 5.500h15v6.500h-2.500v3h2v5h-14.500z" fill="none" stroke="#f0e400" stroke-width="1.800"/><path d="M8 12.500l3.500 4L17.500 8" stroke="#3cb83c" stroke-width="3" fill="none"/><polygon points="17,2.500 22,2.500 19.500,5.200" fill="#000"/></svg></div><div class="ic" style="left:31.5px;top:209px;"><svg viewBox="0 0 24 24"><path d="M3 8q3-6 6 0t6 8t6-2" stroke="#3f6ad0" stroke-width="1.700" fill="none"/><path d="M3 16q5 5 9-2" stroke="#3f6ad0" stroke-width="1.500" fill="none"/><ellipse cx="10" cy="20.5" rx="6" ry="1.500" fill="#000" opacity=".22"/><path d="M8.30477 17.366L20 4" stroke="#6e4a14" stroke-width="3.800"/><path d="M8.30477 17.366L18.2879 5.9567" stroke="#d9a448" stroke-width="2.400"/><path d="M8.6058 17.6294L18.5889 6.2201" stroke="#f0cf80" stroke-width=".800"/><path d="M18.4196 5.80618L19.8024 4.22577" stroke="#e03030" stroke-width="2.600"/><polygon points="6,20 9.85696,18.3255 7.14768,15.9549" fill="#e8c890" stroke="#6e4a14" stroke-width=".500"/><path d="M6 20L6.85606 19.0217" stroke="#3a2a10" stroke-width="1.200"/><polygon points="17,2.500 22,2.500 19.500,5.200" fill="#000"/></svg></div><div class="ic" style="left:31.5px;top:235px;"><svg viewBox="0 0 24 24"><polygon points="8,5 22,3 17,19 2,21" fill="#6f9cf0" stroke="#2a4fb8" stroke-width="1"/><path d="M15 4l-5.500 16M5 13l14.500-2" stroke="#e8f0ff" stroke-width="1.200"/><polygon points="17,2.500 22,2.500 19.500,5.200" fill="#000"/></svg></div><div class="ic" style="left:31.5px;top:261px;"><svg viewBox="0 0 24 24"><ellipse cx="13" cy="21" rx="8" ry="1.600" fill="#000" opacity=".2"/><polygon points="12,3.5 19.83,8 12,12.5 4.17,8" fill="#d6d6d6" stroke="#3a3a3a" stroke-width="0.6"/><polygon points="4.17,8 12,12.5 12,21.5 4.17,17" fill="#8c8c8c" stroke="#3a3a3a" stroke-width="0.6"/><polygon points="19.83,8 12,12.5 12,21.5 19.83,17" fill="#5a5a5a" stroke="#3a3a3a" stroke-width="0.6"/><polygon points="17,2.500 22,2.500 19.500,5.200" fill="#000"/></svg></div><div class="ic" style="left:31.5px;top:287px;"><svg viewBox="0 0 24 24"><path d="M4.500 6v15M19.500 6v15" stroke="#4a4a4a" stroke-width="1.100"/><path d="M6 8.500h12" stroke="#ece400" stroke-width="1.800"/><path d="M4.800 8.500l4-2.400v4.800zM19.200 8.500l-4-2.400v4.800z" fill="#ece400" stroke="#555" stroke-width=".5"/><polygon points="17,2.500 22,2.500 19.500,5.200" fill="#000"/></svg></div><div class="ic" style="left:31.5px;top:313px;"><svg viewBox="0 0 24 24"><g transform="translate(-1 1)"><ellipse cx="12" cy="20.500" rx="8" ry="1.800" fill="#000" opacity=".13"/><path d="M3.800 9.200 L11.300 2.800 L11.300 6.400 C17 6.400 19.400 10 19 13.600 C18.600 17.200 16.400 19.600 13.800 20.600 C15.400 17.600 15 13.200 11.300 12.300 L11.300 15.600 Z" fill="url(#gArr)" stroke="#6f6f6f" stroke-width=".5"/></g><polygon points="17,2.500 22,2.500 19.500,5.200" fill="#000"/></svg></div><div class="ic" style="left:31.5px;top:339px;"><svg viewBox="0 0 24 24"><path d="M2 4.95h5.95l1.7 1.95h8.5v9.1h-16.15z" fill="#ecc468" stroke="#c89a34" stroke-width="0.7"/><path d="M2 16l2.55 -7.8h15.3l-2.04 7.8z" fill="#fae08c" stroke="#c89a34" stroke-width="0.7"/><path d="M11 5q3-3 7-1" fill="none" stroke="#2fa02f" stroke-width="2"/><polygon points="16,1.500 21,4.500 16,7.500" fill="#2fa02f"/><path d="M6 13h10.2l4.8 4.8v4.2h-15z" fill="#f4f6fb" stroke="#222" stroke-width="1"/><path d="M16.2 13v4.8h4.8" fill="none" stroke="#222" stroke-width="0.8"/></svg></div><div id="st1" class="abs"></div><div id="st2" class="abs"></div><div id="stline" class="abs"></div><div class="abs" style="left:1337px;top:1004px;width:3px;height:14px;background:repeating-linear-gradient(#fff 0 2px,transparent 2px 4px)"></div><div class="abs" style="left:1341px;top:1004px;width:131px;height:16px;background:#fff"></div><svg class="abs" style="left:1458px;top:1004px" width="14" height="14" viewBox="0 0 14 14"><circle cx="8.500" cy="5.500" r="3.300" fill="none" stroke="#3a5a8a" stroke-width="1.200"/><path d="M6 8L2.500 11.500" stroke="#3a5a8a" stroke-width="1.500"/></svg><div class="abs" style="left:1474px;top:1004px;width:3px;height:14px;background:repeating-linear-gradient(#fff 0 2px,transparent 2px 4px)"></div><div class="stt" style="left:1486px;top:1005px">绝对 XY 上视图</div><div class="vsep" style="left:1592px;top:1004px;height:14px"></div><div class="stt" style="left:1601px;top:1005px">绝对视图</div><div class="abs" style="left:1657px;top:1004px;width:4px;height:14px;background:repeating-linear-gradient(#c4c8d6 0 1px,transparent 1px 2px);opacity:.9"></div><div class="stt" style="left:1668px;top:1005px;font-weight:bold;letter-spacing:-.2px">LAYER0</div><div class="vsep" style="left:1726px;top:1004px;height:14px"></div><div class="abs" style="left:1762px;top:1005px;width:32px;height:12px;background:#3d5f94"></div><div class="abs" style="left:1805px;top:1005px;width:32px;height:12px;background:#3d5f94"></div><div class="abs" style="left:1848px;top:1005px;width:32px;height:12px;background:#3d5f94"></div><div class="vsep" style="left:1755px;top:1004px;height:14px"></div><div class="vsep" style="left:1798px;top:1004px;height:14px"></div><div class="vsep" style="left:1842px;top:1004px;height:14px"></div><div class="vsep" style="left:1885px;top:1004px;height:14px"></div><svg class="abs" style="left:1893px;top:1004px" width="15" height="15" viewBox="0 0 15 15"><circle cx="7.500" cy="7.500" r="6.500" fill="#1a3aa8" stroke="#0a1a5a" stroke-width=".8"/><path d="M3 5q2-3 4-1t1 3t-3 1zM8 9q3-2 4 0t-2 3z" fill="#2fbf2f"/><circle cx="5" cy="4" r="1.500" fill="#fff" opacity=".5"/></svg><div class="stt" style="left:1141px;top:1024px">拴牢</div><div class="vsep" style="left:1132px;top:1024px;height:14px"></div><div class="vsep" style="left:1175px;top:1024px;height:14px"></div><div class="vsep" style="left:1206px;top:1024px;height:14px"></div><div class="vsep" style="left:1237px;top:1024px;height:14px"></div><div class="vsep" style="left:1268px;top:1024px;height:14px"></div><div class="vsep" style="left:1299px;top:1024px;height:14px"></div><div class="vsep" style="left:1330px;top:1024px;height:14px"></div><div class="vsep" style="left:1361px;top:1024px;height:14px"></div><div class="vsep" style="left:1392px;top:1024px;height:14px"></div><div class="vsep" style="left:1423px;top:1024px;height:14px"></div><div class="vsep" style="left:1454px;top:1024px;height:14px"></div><div class="vsep" style="left:1580px;top:1024px;height:14px"></div><div class="vsep" style="left:1654px;top:1024px;height:14px"></div><div class="ic" style="left:1178.5px;top:1019px;width:24px;height:24px"><svg viewBox="0 0 24 24"><g transform="translate(3 3) scale(.75)"><rect x="2" y="2" width="20" height="20" fill="#e6c6d0" stroke="#7c7c8c" stroke-width="1.800"/><path d="M6 11.5 a6 5.7 0 0 1 10.5 -1.5" fill="none" stroke="#e04860" stroke-width="3"/><polygon points="13.5,10.5 21.3,10 17.7,16" fill="#e04860"/><path d="M18 13.5 a6 5.7 0 0 1 -10.5 1.5" fill="none" stroke="#e87890" stroke-width="3"/><polygon points="10.5,14.5 2.7,15 6.3,9" fill="#e87890"/></g></svg></div><div class="abs" style="left:1211.5px;top:1022px;width:20px;height:18px;background:#fbe28a"></div><div class="ic" style="left:1209.5px;top:1019px;width:24px;height:24px"><svg viewBox="0 0 24 24"><g transform="translate(3 3) scale(.75)"><path d="M5 3l8 3-1 9-9-4z" fill="#c050c0"/><path d="M9 9l10 10" stroke="#b08a3a" stroke-width="3.500"/><path d="M3 3l3 3M14 2l-2 3M2 12l3-1" stroke="#e0a020" stroke-width="1.500"/></g></svg></div><div class="ic" style="left:1240.5px;top:1019px;width:24px;height:24px"><svg viewBox="0 0 24 24"><g transform="translate(3 3) scale(.75)"><path d="M3 12l9-8 9 8" fill="none" stroke="#e0902a" stroke-width="2.500"/><rect x="6" y="11" width="12" height="10" fill="#9ab0d8" stroke="#3a4a7a" stroke-width="1"/><path d="M4 8l16-2" stroke="#c07a2a" stroke-width="2"/><rect x="10" y="14" width="4" height="7" fill="#3f5aa8"/></g></svg></div><div class="ic" style="left:1271.5px;top:1019px;width:24px;height:24px"><svg viewBox="0 0 24 24"><g transform="translate(3 3) scale(.75)"><ellipse cx="12" cy="22" rx="6" ry="1.500" fill="#9aa"/><path d="M7 8q0-6 5-6t5 5q0 3-4 5v3" fill="none" stroke="#3f6ad0" stroke-width="3.500"/><circle cx="13" cy="19" r="2.200" fill="#3f6ad0"/></g></svg></div><div class="ic" style="left:1302.5px;top:1019px;width:24px;height:24px"><svg viewBox="0 0 24 24"><g transform="translate(3 3) scale(.75)"><polygon points="15,7 21.09,10.5 15,14 8.91,10.5" fill="#7aa8f0" stroke="#123" stroke-width="0.6"/><polygon points="8.91,10.5 15,14 15,21 8.91,17.5" fill="#3a68c8" stroke="#123" stroke-width="0.6"/><polygon points="21.09,10.5 15,14 15,21 21.09,17.5" fill="#1f3f90" stroke="#123" stroke-width="0.6"/><path d="M2 6l9 6M2 18l9-5M1 12h10" stroke="#e02020" stroke-width="2"/></g></svg></div><div class="abs" style="left:1335.5px;top:1022px;width:20px;height:18px;background:#fbe28a"></div><div class="ic" style="left:1333.5px;top:1019px;width:24px;height:24px"><svg viewBox="0 0 24 24"><g transform="translate(3 3) scale(.75)"><polygon points="12,2 20.7,7 12,12 3.3,7" fill="#e84ae0" stroke="#223" stroke-width="0.8"/><polygon points="3.3,7 12,12 12,22 3.3,17" fill="#3fb8f0" stroke="#223" stroke-width="0.8"/><polygon points="20.7,7 12,12 12,22 20.7,17" fill="#3050d0" stroke="#223" stroke-width="0.8"/></g></svg></div><div class="ic" style="left:1364.5px;top:1019px;width:24px;height:24px"><svg viewBox="0 0 24 24"><g transform="translate(3 3) scale(.75)"><rect x="6" y="2" width="12" height="20" fill="#f4e8c0" stroke="#555" stroke-width="1.400"/><path d="M6 7h12M6 12h12M6 17h12" stroke="#555" stroke-width="1.600"/><rect x="7" y="8" width="10" height="3.500" fill="#e0a040"/></g></svg></div><div class="ic" style="left:1395.5px;top:1019px;width:24px;height:24px"><svg viewBox="0 0 24 24"><g transform="translate(3 3) scale(.75)"><path d="M17 5a9 9 0 1 1-9-1" fill="none" stroke="#1f9a1f" stroke-width="2.800"/><polygon points="8,0 8,9 2,4.500" fill="#1f9a1f"/><circle cx="12" cy="13" r="2.200" fill="#2a3ab0"/></g></svg></div><div class="ic" style="left:1426.5px;top:1019px;width:24px;height:24px"><svg viewBox="0 0 24 24"><g transform="translate(3 3) scale(.75)"><rect x="2" y="2" width="20" height="20" fill="#e4e7f0" stroke="#6c6c78" stroke-width="2.200"/><path d="M12 2v20M2 12h20" stroke="#2a2a4a" stroke-width="2"/></g></svg></div><div class="stt" style="left:1463px;top:1024px">LS: 1.00 PS: 1.00</div><div class="stt" style="left:1589px;top:1024px">单位: 毫米</div><div class="stt" style="left:1663px;top:1024px;color:#e81010;letter-spacing:.35px">X =-0035.431</div><div class="stt" style="left:1745px;top:1024px;letter-spacing:.36px">Y = 2398.955 Z = 0000.000</div><div id="task" class="abs"><div class="abs" style="left:440px;top:0;width:1480px;height:8px;background:linear-gradient(90deg,#4a4434,#40382a 50%,#3a2e22)"></div><div class="abs" style="left:394px;top:0;width:44px;height:8px;background:#645e50"></div><div class="abs" style="left:438px;top:0;width:2px;height:8px;background:#2c2a26"></div><div class="abs" style="left:1915px;top:0;width:1px;height:8px;background:#6a6258"></div><div class="abs" style="left:1814px;top:0px;color:#fff;font-size:12.500px;line-height:12px;height:8px;overflow:hidden;letter-spacing:.3px"><span style="position:relative;top:4px">11:26</span></div></div></body></html>
